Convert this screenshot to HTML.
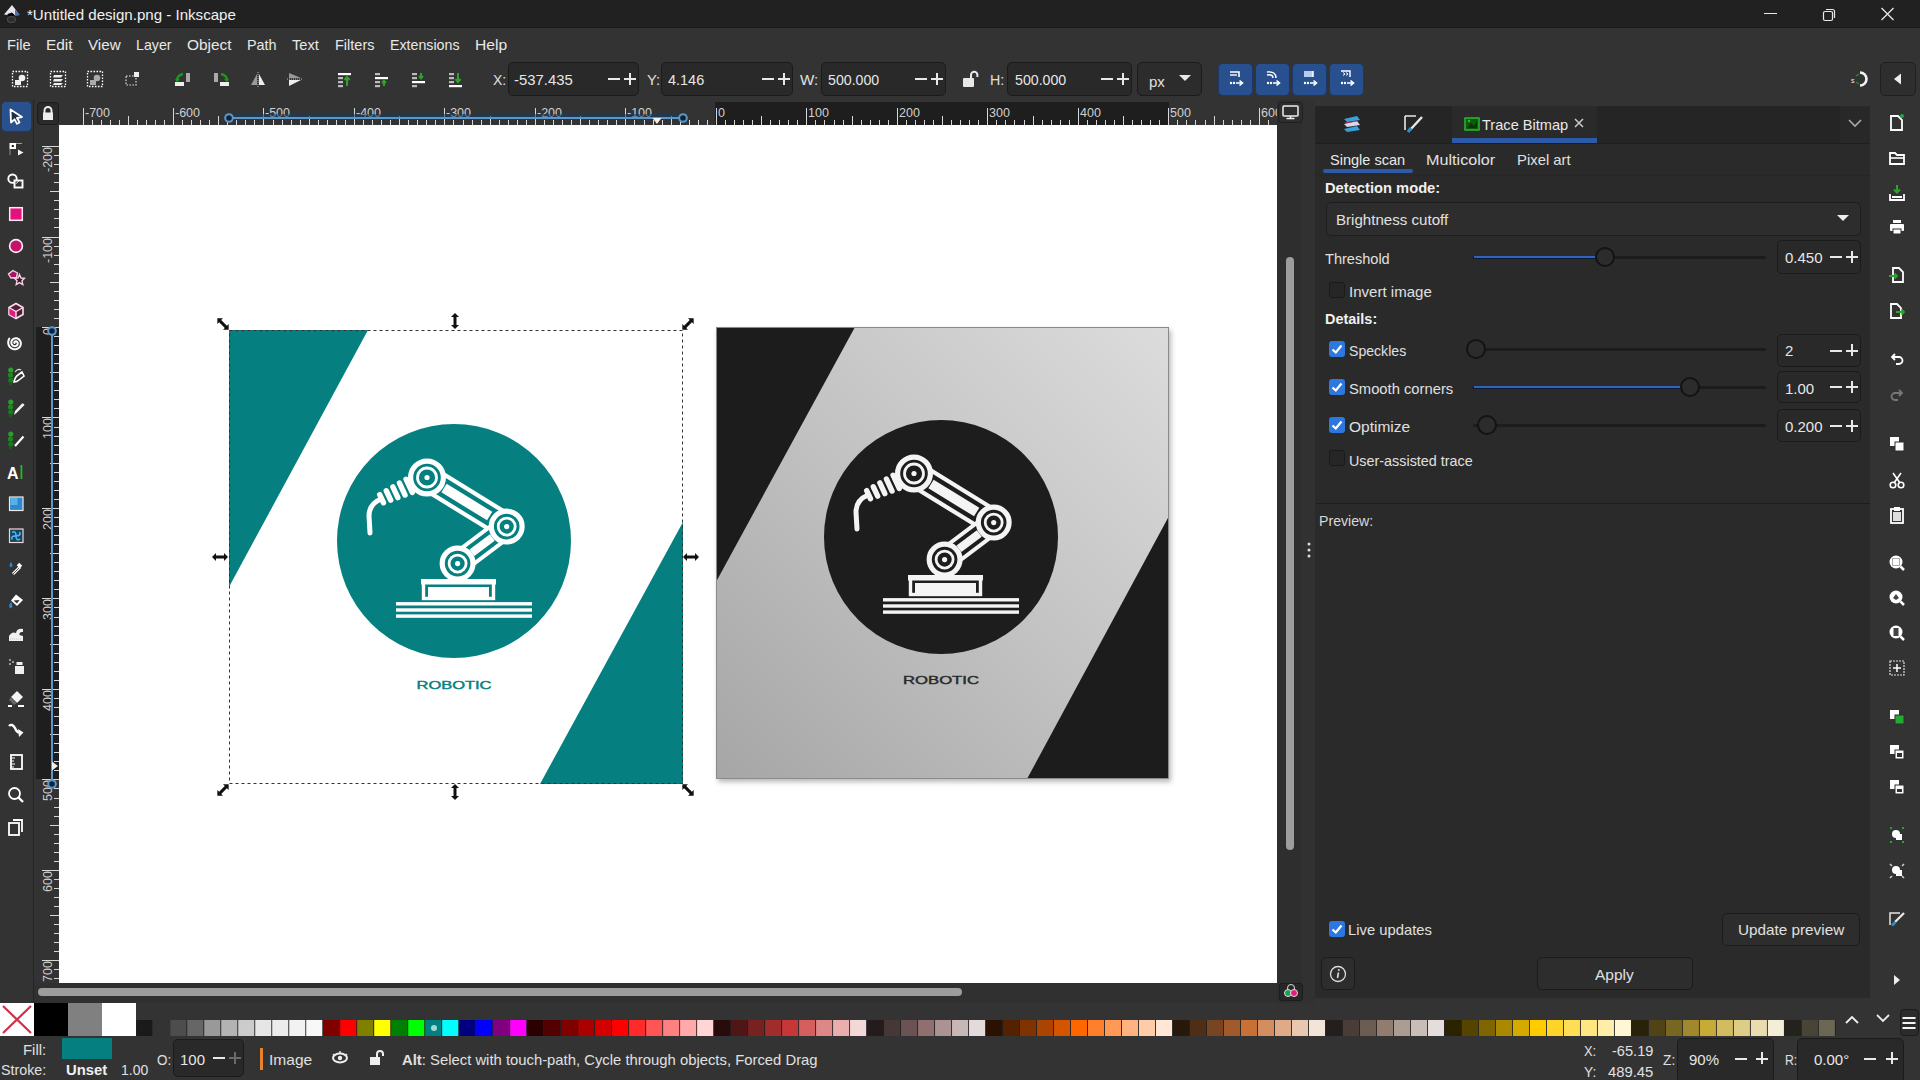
<!DOCTYPE html>
<html><head><meta charset="utf-8">
<style>
*{margin:0;padding:0;box-sizing:border-box}
html,body{width:1920px;height:1080px;overflow:hidden;background:#333333;font-family:"Liberation Sans",sans-serif;color:#e6e6e6;position:relative}
.a{position:absolute}
.t{position:absolute;white-space:nowrap;line-height:1}
.box{position:absolute;background:#292929;border:1px solid #1b1b1b;border-radius:5px}
.btnb{position:absolute;background:#28508e;border:1px solid #1b3866;border-radius:5px}
.sw{position:absolute;top:1020px;height:16px}
</style></head><body>

<div class="a" style="left:0px;top:0px;width:1920px;height:28px;background:#212121;"></div>
<div class="a" style="left:0px;top:27px;width:1920px;height:1px;background:#1a1a1a;"></div>
<svg class="a" style="left:0px;top:0px;" width="24" height="28" viewBox="0 0 24 28"><path d="M4 14.5 L12 5 L15.5 9.5 L19.5 15 L15 15.5 L12 13 L8 15Z" fill="#e6e6ee"/><path d="M15 9.5 L20 15 L15 15.5Z" fill="#4f6fa6"/><path d="M7.5 14 L12 12.5 L15 15.5 L12 16.5 L8 16Z" fill="#060610"/><ellipse cx="11.5" cy="19.5" rx="4" ry="3" fill="#2e2e2e" stroke="#4a4a4a" stroke-width="1.2"/></svg>
<div class="t tt" style="left:27px;top:7.3px;font-size:15px;color:#f0f0f0;font-weight:normal;transform-origin:0 0;transform:scaleX(1.0061);">*Untitled design.png - Inkscape</div>
<div class="a" style="left:1764px;top:13px;width:13px;height:1.2px;background:#e8e8e8;"></div>
<svg class="a" style="left:1822px;top:7px;" width="16" height="16" viewBox="0 0 16 16"><rect x="1.5" y="4.5" width="9" height="9" rx="1.5" fill="none" stroke="#e8e8e8" stroke-width="1.2"/><path d="M4 2.5 H10.5 a2 2 0 0 1 2 2 V11" fill="none" stroke="#e8e8e8" stroke-width="1.2"/></svg>
<svg class="a" style="left:1880px;top:7px;" width="16" height="16" viewBox="0 0 16 16"><path d="M1.5 1 L13.5 13 M13.5 1 L1.5 13" stroke="#e8e8e8" stroke-width="1.3"/></svg>
<div class="t tt" style="left:7.300000000000001px;top:37.3px;font-size:15px;color:#e8e8e8;font-weight:normal;transform-origin:0 0;transform:scaleX(0.9763);">File</div>
<div class="t tt" style="left:46.3px;top:37.3px;font-size:15px;color:#e8e8e8;font-weight:normal;transform-origin:0 0;transform:scaleX(1.0286);">Edit</div>
<div class="t tt" style="left:88.3px;top:37.3px;font-size:15px;color:#e8e8e8;font-weight:normal;transform-origin:0 0;transform:scaleX(1.0109);">View</div>
<div class="t tt" style="left:136.3px;top:37.3px;font-size:15px;color:#e8e8e8;font-weight:normal;transform-origin:0 0;transform:scaleX(0.9485);">Layer</div>
<div class="t tt" style="left:187.3px;top:37.3px;font-size:15px;color:#e8e8e8;font-weight:normal;transform-origin:0 0;transform:scaleX(1.0286);">Object</div>
<div class="t tt" style="left:247.3px;top:37.3px;font-size:15px;color:#e8e8e8;font-weight:normal;transform-origin:0 0;transform:scaleX(0.9592);">Path</div>
<div class="t tt" style="left:292.3px;top:37.3px;font-size:15px;color:#e8e8e8;font-weight:normal;transform-origin:0 0;transform:scaleX(0.9776);">Text</div>
<div class="t tt" style="left:334.7px;top:37.3px;font-size:15px;color:#e8e8e8;font-weight:normal;transform-origin:0 0;transform:scaleX(0.9671);">Filters</div>
<div class="t tt" style="left:389.7px;top:37.3px;font-size:15px;color:#e8e8e8;font-weight:normal;transform-origin:0 0;transform:scaleX(0.9472);">Extensions</div>
<div class="t tt" style="left:474.7px;top:37.3px;font-size:15px;color:#e8e8e8;font-weight:normal;transform-origin:0 0;transform:scaleX(1.0434);">Help</div>
<svg class="a" style="left:11px;top:70px;" width="18" height="18" viewBox="0 0 18 18"><rect x="1.5" y="1.5" width="15" height="15" fill="none" stroke="#fff" stroke-width="1.3" stroke-dasharray="1.6 1.4"/><path d="M4 10 h6 v5 h-6z" fill="#f0f0f0"/><circle cx="11" cy="8" r="3.3" fill="#f0f0f0"/></svg>
<svg class="a" style="left:49px;top:70px;" width="18" height="18" viewBox="0 0 18 18"><rect x="1.5" y="1.5" width="15" height="15" fill="none" stroke="#fff" stroke-width="1.3" stroke-dasharray="1.6 1.4"/><path d="M5 5 h9 l-2 2.5 h-8z M5 9 h9 l-2 2.5 h-8z M5 13 h9 l-2 2 h-8z" fill="#eee"/></svg>
<svg class="a" style="left:86px;top:70px;" width="18" height="18" viewBox="0 0 18 18"><rect x="1.5" y="1.5" width="15" height="15" fill="none" stroke="#fff" stroke-width="1.3" stroke-dasharray="1.6 1.4"/><path d="M4 10 h6 v5 h-6z" fill="#aaa"/><circle cx="11" cy="8" r="3.3" fill="#aaa"/></svg>
<svg class="a" style="left:123px;top:70px;" width="18" height="18" viewBox="0 0 18 18"><rect x="3" y="6" width="10" height="9" fill="none" stroke="#ddd" stroke-width="1.2" stroke-dasharray="1.6 1.4"/><rect x="11" y="2" width="5" height="5" fill="#eee"/></svg>
<svg class="a" style="left:174px;top:70px;" width="18" height="18" viewBox="0 0 18 18"><rect x="1" y="12" width="9" height="4" fill="#eee"/><rect x="12" y="3" width="4" height="9" fill="#aaa"/><path d="M3 11 Q3 5 9 4" stroke="#1a9a1a" stroke-width="2.4" fill="none"/><path d="M1 9 L3 12 L6 9Z" fill="#1a9a1a"/></svg>
<svg class="a" style="left:212px;top:70px;" width="18" height="18" viewBox="0 0 18 18"><rect x="8" y="12" width="9" height="4" fill="#eee"/><rect x="2" y="3" width="4" height="9" fill="#aaa"/><path d="M15 11 Q15 5 9 4" stroke="#1a9a1a" stroke-width="2.4" fill="none"/><path d="M17 9 L15 12 L12 9Z" fill="#1a9a1a"/></svg>
<svg class="a" style="left:249px;top:70px;" width="18" height="18" viewBox="0 0 18 18"><path d="M8 4 L8 15 L2 15Z" fill="#999"/><path d="M10 4 L10 15 L16 15Z" fill="#eee"/><path d="M9 2 V17" stroke="#ddd" stroke-width="0.8" stroke-dasharray="1 1"/></svg>
<svg class="a" style="left:286px;top:70px;" width="18" height="18" viewBox="0 0 18 18"><path d="M3 8 L15 8 L3 3Z" fill="#999"/><path d="M3 10 L15 10 L3 16Z" fill="#eee"/><path d="M1 9 H17" stroke="#ddd" stroke-width="0.8" stroke-dasharray="1 1"/></svg>
<svg class="a" style="left:336px;top:70px;" width="18" height="18" viewBox="0 0 18 18"><rect x="2" y="3" width="13" height="2.2" fill="#fff"/><rect x="2" y="7" width="5" height="2.2" fill="#bbb"/><rect x="2" y="11" width="5" height="2.2" fill="#bbb"/><rect x="2" y="15" width="5" height="2.2" fill="#bbb"/><path d="M11 16 V8 M8.5 10 L11 7 L13.5 10" stroke="#2aa52a" stroke-width="2" fill="none"/></svg>
<svg class="a" style="left:373px;top:70px;" width="18" height="18" viewBox="0 0 18 18"><rect x="2" y="3" width="5" height="2.2" fill="#bbb"/><rect x="2" y="7" width="13" height="2.2" fill="#fff"/><rect x="2" y="11" width="5" height="2.2" fill="#bbb"/><rect x="2" y="15" width="5" height="2.2" fill="#bbb"/><path d="M11 16 V11 M9 13 L11 10.5 L13 13" stroke="#2aa52a" stroke-width="2" fill="none"/></svg>
<svg class="a" style="left:410px;top:70px;" width="18" height="18" viewBox="0 0 18 18"><rect x="2" y="3" width="5" height="2.2" fill="#bbb"/><rect x="2" y="7" width="5" height="2.2" fill="#bbb"/><rect x="2" y="11" width="13" height="2.2" fill="#fff"/><rect x="2" y="15" width="5" height="2.2" fill="#bbb"/><path d="M11 3 V8 M9 6 L11 8.5 L13 6" stroke="#2aa52a" stroke-width="2" fill="none"/></svg>
<svg class="a" style="left:447px;top:70px;" width="18" height="18" viewBox="0 0 18 18"><rect x="2" y="3" width="5" height="2.2" fill="#bbb"/><rect x="2" y="7" width="5" height="2.2" fill="#bbb"/><rect x="2" y="11" width="5" height="2.2" fill="#bbb"/><rect x="2" y="15" width="13" height="2.2" fill="#fff"/><path d="M11 3 V12 M8.5 9 L11 12 L13.5 9" stroke="#2aa52a" stroke-width="2" fill="none"/></svg>
<div class="t tt" style="left:492.5px;top:72.3px;font-size:15px;color:#e0e0e0;font-weight:normal;transform-origin:0 0;transform:scaleX(0.9304);">X:</div>
<div class="box" style="left:508px;top:62px;width:131px;height:34px"></div>
<div class="t tt" style="left:514px;top:72.3px;font-size:15px;color:#e6e6e6;font-weight:normal;transform-origin:0 0;transform:scaleX(0.9912);">-537.435</div>
<div class="a" style="left:608px;top:78px;width:12px;height:1.6px;background:#e8e8e8;"></div>
<div class="a" style="left:624px;top:78px;width:12px;height:1.6px;background:#e8e8e8;"></div>
<div class="a" style="left:629.2px;top:73px;width:1.6px;height:12px;background:#e8e8e8;"></div>
<div class="t tt" style="left:646.5px;top:72.3px;font-size:15px;color:#e0e0e0;font-weight:normal;transform-origin:0 0;transform:scaleX(0.9881);">Y:</div>
<div class="box" style="left:661px;top:62px;width:132px;height:34px"></div>
<div class="t tt" style="left:668px;top:72.3px;font-size:15px;color:#e6e6e6;font-weight:normal;transform-origin:0 0;transform:scaleX(0.9641);">4.146</div>
<div class="a" style="left:762px;top:78px;width:12px;height:1.6px;background:#e8e8e8;"></div>
<div class="a" style="left:778px;top:78px;width:12px;height:1.6px;background:#e8e8e8;"></div>
<div class="a" style="left:783.2px;top:73px;width:1.6px;height:12px;background:#e8e8e8;"></div>
<div class="t tt" style="left:799.5px;top:72.3px;font-size:15px;color:#e0e0e0;font-weight:normal;transform-origin:0 0;transform:scaleX(1.0076);">W:</div>
<div class="box" style="left:821px;top:62px;width:125px;height:34px"></div>
<div class="t tt" style="left:827.5px;top:72.3px;font-size:15px;color:#e6e6e6;font-weight:normal;transform-origin:0 0;transform:scaleX(0.9441);">500.000</div>
<div class="a" style="left:915px;top:78px;width:12px;height:1.6px;background:#e8e8e8;"></div>
<div class="a" style="left:931px;top:78px;width:12px;height:1.6px;background:#e8e8e8;"></div>
<div class="a" style="left:936.2px;top:73px;width:1.6px;height:12px;background:#e8e8e8;"></div>
<svg class="a" style="left:961px;top:70px;" width="18" height="18" viewBox="0 0 18 18"><rect x="2" y="8" width="11" height="9" rx="1" fill="#e8e8e8"/><path d="M10 8 V5 a3.2 3.2 0 0 1 6.4 0 V7" stroke="#e8e8e8" stroke-width="2" fill="none"/></svg>
<div class="t tt" style="left:990px;top:72.3px;font-size:15px;color:#e0e0e0;font-weight:normal;transform-origin:0 0;transform:scaleX(0.9467);">H:</div>
<div class="box" style="left:1007px;top:62px;width:125px;height:34px"></div>
<div class="t tt" style="left:1015px;top:72.3px;font-size:15px;color:#e6e6e6;font-weight:normal;transform-origin:0 0;transform:scaleX(0.9441);">500.000</div>
<div class="a" style="left:1101px;top:78px;width:12px;height:1.6px;background:#e8e8e8;"></div>
<div class="a" style="left:1117px;top:78px;width:12px;height:1.6px;background:#e8e8e8;"></div>
<div class="a" style="left:1122.2px;top:73px;width:1.6px;height:12px;background:#e8e8e8;"></div>
<div class="box" style="left:1137px;top:62px;width:65px;height:34px;background:#2c2c2c"></div>
<div class="t tt" style="left:1149px;top:74.3px;font-size:15px;color:#e0e0e0;font-weight:normal;">px</div>
<svg class="a" style="left:1177px;top:72px;" width="16" height="12" viewBox="0 0 16 12"><path d="M2 3 H14 L8 9Z" fill="#e8e8e8"/></svg>
<div class="btnb" style="left:1218px;top:63px;width:35px;height:33px"></div>
<svg class="a" style="left:1226px;top:68px;" width="20" height="22" viewBox="0 0 20 22"><path d="M4 4 H13 V9" stroke="#fff" stroke-width="1.6" fill="none"/><path d="M4 7 H11" stroke="#fff" stroke-width="1.4"/><circle cx="5" cy="15" r="1.2" fill="#fff"/><circle cx="8" cy="15" r="1.2" fill="#fff"/><path d="M10 15 H16 M13.5 12.5 L16.5 15 L13.5 17.5" stroke="#fff" stroke-width="1.6" fill="none"/></svg>
<div class="btnb" style="left:1255px;top:63px;width:35px;height:33px"></div>
<svg class="a" style="left:1263px;top:68px;" width="20" height="22" viewBox="0 0 20 22"><path d="M4 4 Q13 3 13 10 M4 7 Q10 6 10 10" stroke="#fff" stroke-width="1.5" fill="none"/><circle cx="5" cy="15" r="1.2" fill="#fff"/><circle cx="8" cy="15" r="1.2" fill="#fff"/><path d="M10 15 H16 M13.5 12.5 L16.5 15 L13.5 17.5" stroke="#fff" stroke-width="1.6" fill="none"/></svg>
<div class="btnb" style="left:1292px;top:63px;width:35px;height:33px"></div>
<svg class="a" style="left:1300px;top:68px;" width="20" height="22" viewBox="0 0 20 22"><rect x="4" y="3" width="9" height="6" fill="#cfe0ff" opacity=".85"/><path d="M13 3 V9" stroke="#fff" stroke-width="1.5"/><circle cx="5" cy="15" r="1.2" fill="#fff"/><circle cx="8" cy="15" r="1.2" fill="#fff"/><path d="M10 15 H16 M13.5 12.5 L16.5 15 L13.5 17.5" stroke="#fff" stroke-width="1.6" fill="none"/></svg>
<div class="btnb" style="left:1329px;top:63px;width:35px;height:33px"></div>
<svg class="a" style="left:1337px;top:68px;" width="20" height="22" viewBox="0 0 20 22"><path d="M4 3 H13 V9" stroke="#fff" stroke-width="1.4" fill="none"/><path d="M6 4.5 L8 6 L6 7.5 M9 4.5 L11 6 L9 7.5" stroke="#fff" stroke-width="1" fill="none"/><circle cx="5" cy="15" r="1.2" fill="#fff"/><circle cx="8" cy="15" r="1.2" fill="#fff"/><path d="M10 15 H16 M13.5 12.5 L16.5 15 L13.5 17.5" stroke="#fff" stroke-width="1.6" fill="none"/></svg>
<svg class="a" style="left:1848px;top:68px;" width="24" height="22" viewBox="0 0 24 22"><path d="M12 4.5 A6.5 6.5 0 1 1 12 17.5" stroke="#f4f4f4" stroke-width="2.6" fill="none"/><path d="M8 8 L11 6 M8 14 L11 16" stroke="#2a8a3a" stroke-width="1.2"/><text x="3" y="15" font-size="7" fill="#eee" font-family="Liberation Sans">s</text></svg>
<div class="box" style="left:1880px;top:62px;width:36px;height:34px;background:#2e2e2e;border-color:#1f1f1f"></div>
<svg class="a" style="left:1890px;top:71px;" width="16" height="16" viewBox="0 0 16 16"><path d="M11 2.5 V13.5 L4 8Z" fill="#eee"/></svg>
<div class="a" style="left:33px;top:100px;width:1px;height:903px;background:#252525;"></div>
<div class="a" style="left:1px;top:101px;width:31px;height:31px;background:#28518d;border:1px solid #1d3a66;border-radius:5px"></div>
<svg class="a" style="left:6px;top:106px;" width="20" height="20" viewBox="0 0 20 20"><path d="M4.5 3.5 L16 11 L11 12 L13.5 16.5 L11 17.8 L8.6 13.3 L5 16.5Z" fill="#20304a" stroke="#fff" stroke-width="1.8" stroke-linejoin="round"/></svg>
<svg class="a" style="left:6px;top:138px;" width="20" height="20" viewBox="0 0 20 20"><rect x="3.5" y="5" width="6.5" height="6" fill="#fff"/><rect x="5.8" y="7" width="2" height="2" fill="#111"/><path d="M10 5.5 H16" stroke="#bbb" stroke-width="0.8"/><path d="M4 11 V17" stroke="#999" stroke-width="0.9"/><path d="M12 11.5 L17.5 14.5 L12 17.5Z" fill="#f4f4f4"/></svg>
<svg class="a" style="left:6px;top:171px;" width="20" height="20" viewBox="0 0 20 20"><circle cx="6.5" cy="7.7" r="4.2" fill="none" stroke="#fff" stroke-width="1.9"/><rect x="8.5" y="9.5" width="8" height="7" fill="#333" stroke="#fff" stroke-width="1.9"/><path d="M9.5 13 L13 10" stroke="#ddd" stroke-width="1"/></svg>
<svg class="a" style="left:6px;top:204px;" width="20" height="20" viewBox="0 0 20 20"><rect x="3.7" y="3.7" width="12.6" height="12.6" fill="#e3127f" stroke="#fde8f4" stroke-width="1.5"/></svg>
<svg class="a" style="left:6px;top:236px;" width="20" height="20" viewBox="0 0 20 20"><circle cx="10" cy="10" r="6.4" fill="#c4136a" stroke="#fdf0f6" stroke-width="1.6"/></svg>
<svg class="a" style="left:6px;top:268px;" width="20" height="20" viewBox="0 0 20 20"><path d="M7 2.5 L11.5 5 L10.5 9.5 L5 10 L2.5 6Z" fill="#a8155e" stroke="#f6d2e6" stroke-width="1.4"/><path d="M13.5 6.5 L15 10 L18.5 10.3 L16 12.8 L16.8 16.5 L13.5 14.6 L10.2 16.5 L11 12.8 L8.5 10.3 L12 10Z" fill="#3a1a2a" stroke="#f6d2e6" stroke-width="1.4"/></svg>
<svg class="a" style="left:6px;top:301px;" width="20" height="20" viewBox="0 0 20 20"><path d="M10 2.5 L17 6.5 V13.5 L10 17.5 L3 13.5 V6.5Z" fill="#5a1a3a" stroke="#fae0ee" stroke-width="1.6"/><path d="M3.5 7 L10 10.5 V17 L3.5 13.5Z" fill="#d8207e"/><path d="M3 6.5 L10 10.5 L17 6.5 M10 10.5 V17.5" stroke="#fae0ee" stroke-width="1.4" fill="none"/></svg>
<svg class="a" style="left:6px;top:333px;" width="20" height="20" viewBox="0 0 20 20"><path d="M8.50 10.00 L8.41 9.80 L8.38 9.57 L8.41 9.31 L8.51 9.04 L8.69 8.80 L8.94 8.59 L9.25 8.43 L9.61 8.35 L10.01 8.36 L10.42 8.46 L10.81 8.67 L11.16 8.98 L11.44 9.38 L11.64 9.85 L11.72 10.38 L11.68 10.94 L11.51 11.50 L11.20 12.03 L10.77 12.49 L10.23 12.85 L9.59 13.10 L8.90 13.19 L8.17 13.13 L7.46 12.90 L6.79 12.51 L6.21 11.96 L5.75 11.28 L5.45 10.49 L5.33 9.62 L5.40 8.73 L5.68 7.86 L6.15 7.04 L6.81 6.34 L7.63 5.78 L8.57 5.41 L9.60 5.25 L10.66 5.32 L11.70 5.64 L12.67 6.18 L13.51 6.94 L14.17 7.89 L14.62 8.98 L14.83 10.17 L14.76 11.40 L14.42 12.61 L13.82 13.74 L12.96 14.72 L11.89 15.50 L10.65 16.04 L9.30 16.30 L7.90 16.26 L6.52 15.90 L5.24 15.24 L4.11 14.30 L3.20 13.11 L2.56 11.73 L2.23 10.22 L2.25 8.65 L2.61 7.10 L3.31 5.65" fill="none" stroke="#fff" stroke-width="2" stroke-linecap="round"/></svg>
<svg class="a" style="left:6px;top:366px;" width="20" height="20" viewBox="0 0 20 20"><circle cx="4.8" cy="4" r="2.6" fill="#28a028"/><circle cx="4.5" cy="9" r="2.6" fill="#1e8a1e"/><circle cx="4.8" cy="14" r="2.6" fill="#1b7a1b"/><circle cx="4.5" cy="17.8" r="1.8" fill="#156015"/><path d="M8 16 Q9 11 12 9 L16 6 L18 10 L13 14 Q11 16 8 16Z" fill="none" stroke="#fff" stroke-width="1.6"/><path d="M9 6 Q12 2 15 4" stroke="#ddd" stroke-width="1.2" fill="none"/></svg>
<svg class="a" style="left:6px;top:398px;" width="20" height="20" viewBox="0 0 20 20"><circle cx="4.8" cy="4" r="2.6" fill="#28a028"/><circle cx="4.5" cy="9" r="2.6" fill="#1e8a1e"/><circle cx="4.8" cy="14" r="2.6" fill="#1b7a1b"/><circle cx="4.5" cy="17.8" r="1.8" fill="#156015"/><path d="M8 17 L9 13 L16 5.5 Q18 5 18.5 7 L11 14.5Z" fill="#f2f2f2"/></svg>
<svg class="a" style="left:6px;top:430px;" width="20" height="20" viewBox="0 0 20 20"><circle cx="4.8" cy="4" r="2.6" fill="#28a028"/><circle cx="4.5" cy="9" r="2.6" fill="#1e8a1e"/><circle cx="4.8" cy="14" r="2.6" fill="#1b7a1b"/><circle cx="4.5" cy="17.8" r="1.8" fill="#156015"/><path d="M9 16 L17.5 6.5" stroke="#fff" stroke-width="2.2"/></svg>
<svg class="a" style="left:6px;top:462px;" width="20" height="20" viewBox="0 0 20 20"><text x="1" y="17" font-size="16" font-weight="bold" fill="#fff" font-family="Liberation Sans">A</text><rect x="14.5" y="3" width="1.8" height="14" fill="#22bb22"/></svg>
<svg class="a" style="left:6px;top:494px;" width="20" height="20" viewBox="0 0 20 20"><rect x="3.5" y="3" width="13.5" height="13.5" fill="#2a8ad0" stroke="#f6e6e6" stroke-width="1.2"/><rect x="4.5" y="4" width="7" height="7" fill="#80d0f4" opacity=".55"/></svg>
<svg class="a" style="left:6px;top:526px;" width="20" height="20" viewBox="0 0 20 20"><rect x="3.5" y="3" width="13.5" height="13.5" fill="#16405e" stroke="#f0d6d6" stroke-width="1.2"/><path d="M6 6.5 Q10 4 10 9.8 Q10 15.5 14 13 M6.5 13.5 Q4 9.8 10 9.8 Q15.5 9.8 13.5 6" stroke="#48b4ea" stroke-width="1.7" fill="none"/></svg>
<svg class="a" style="left:6px;top:559px;" width="20" height="20" viewBox="0 0 20 20"><path d="M7 15 L14 8" stroke="#fff" stroke-width="3"/><path d="M6.5 15.5 L14.5 7.5" stroke="#333" stroke-width="0.8"/><path d="M12 5 L15 8" stroke="#fff" stroke-width="3.5"/><path d="M5 3 Q2 7 5 8.5 Q8 7 5 3Z" fill="#2a8ad0"/></svg>
<svg class="a" style="left:6px;top:591px;" width="20" height="20" viewBox="0 0 20 20"><path d="M10 3.5 L17 9 L11 15 L5 9.5Z" fill="#fff"/><path d="M7.5 9.5 L13.5 9 L11 12.5Z" fill="#333"/><path d="M5 11 Q1.5 15 4.5 17.5 Q8 16 5 11Z" fill="#2a8ad0"/></svg>
<svg class="a" style="left:6px;top:624px;" width="20" height="20" viewBox="0 0 20 20"><path d="M3 17 V12 Q6 7 10 9 Q11 4 17 5 V8 Q13 7.5 13.5 11 L17 12 V17Z" fill="#f0f0f0"/><path d="M4 15 H16" stroke="#aaa" stroke-width="0.6" stroke-dasharray="1 1"/></svg>
<svg class="a" style="left:6px;top:656px;" width="20" height="20" viewBox="0 0 20 20"><circle cx="4" cy="4" r="1" fill="#bbb"/><circle cx="7" cy="6" r="1" fill="#bbb"/><circle cx="4" cy="8" r="1" fill="#bbb"/><rect x="9" y="10" width="9" height="8" fill="#f0f0f0"/><rect x="10.5" y="6" width="6" height="3" fill="#f0f0f0"/></svg>
<svg class="a" style="left:6px;top:688px;" width="20" height="20" viewBox="0 0 20 20"><path d="M11 3 L17 9 L11 15 L5 9Z" fill="#f4f4f4"/><path d="M5 9 L11 15 L8 17 L3 12Z" fill="#666"/><rect x="2" y="17" width="4" height="2" fill="#fff"/><rect x="12" y="17" width="6" height="2" fill="#fff"/></svg>
<svg class="a" style="left:6px;top:720px;" width="20" height="20" viewBox="0 0 20 20"><path d="M3 6 Q6 3 9 8 Q11 13 14 12.5" stroke="#fff" stroke-width="2.4" fill="none"/><path d="M12 9 L17.5 12.5 L13 17Z" fill="#fff"/></svg>
<svg class="a" style="left:6px;top:752px;" width="20" height="20" viewBox="0 0 20 20"><rect x="5" y="3" width="11" height="14" fill="none" stroke="#fff" stroke-width="1.8"/><path d="M5 6 H9 M5 9 H8 M5 12 H9 M5 15 H8" stroke="#fff" stroke-width="1.2"/></svg>
<svg class="a" style="left:6px;top:785px;" width="20" height="20" viewBox="0 0 20 20"><circle cx="8.5" cy="8.5" r="5.5" fill="none" stroke="#fff" stroke-width="1.8"/><path d="M12.5 12.5 L17 17" stroke="#fff" stroke-width="2.4"/></svg>
<svg class="a" style="left:6px;top:817px;" width="20" height="20" viewBox="0 0 20 20"><rect x="3" y="6" width="10" height="12" fill="none" stroke="#fff" stroke-width="1.8"/><path d="M7 3 H16 V15" stroke="#fff" stroke-width="1.8" fill="none"/></svg>
<div class="a" style="left:37px;top:102px;width:22px;height:23px;background:#2a2a2a;border:1px solid #1c1c1c;border-radius:4px"></div>
<svg class="a" style="left:40px;top:105px;" width="16" height="16" viewBox="0 0 16 16"><path d="M4.5 8 V5.5 a3.5 3.5 0 0 1 7 0 V8" stroke="#eee" stroke-width="1.9" fill="none"/><rect x="3" y="7.5" width="10" height="7.5" fill="#eee"/></svg>
<div class="a" style="left:59px;top:102px;width:1218px;height:23px;background:#333333;"></div>
<div class="a" style="left:715px;top:102px;width:454px;height:23px;background:#1e1e1e;"></div>
<div class="t" style="left:85px;top:107px;font-size:12.5px;color:#d0d0d0">-700</div>
<div class="t" style="left:175px;top:107px;font-size:12.5px;color:#d0d0d0">-600</div>
<div class="t" style="left:265px;top:107px;font-size:12.5px;color:#d0d0d0">-500</div>
<div class="t" style="left:356px;top:107px;font-size:12.5px;color:#d0d0d0">-400</div>
<div class="t" style="left:446px;top:107px;font-size:12.5px;color:#d0d0d0">-300</div>
<div class="t" style="left:537px;top:107px;font-size:12.5px;color:#d0d0d0">-200</div>
<div class="t" style="left:627px;top:107px;font-size:12.5px;color:#d0d0d0">-100</div>
<div class="t" style="left:718px;top:107px;font-size:12.5px;color:#d0d0d0">0</div>
<div class="t" style="left:808px;top:107px;font-size:12.5px;color:#d0d0d0">100</div>
<div class="t" style="left:899px;top:107px;font-size:12.5px;color:#d0d0d0">200</div>
<div class="t" style="left:989px;top:107px;font-size:12.5px;color:#d0d0d0">300</div>
<div class="t" style="left:1080px;top:107px;font-size:12.5px;color:#d0d0d0">400</div>
<div class="t" style="left:1170px;top:107px;font-size:12.5px;color:#d0d0d0">500</div>
<div class="t" style="left:1261px;top:107px;font-size:12.5px;color:#d0d0d0">600</div>
<svg class="a" style="left:59px;top:102px;" width="1218" height="23" viewBox="0 0 1218 23"><rect x="24" y="6" width="1" height="17" fill="#d8d8d8"/><rect x="33" y="18" width="1" height="5" fill="#d8d8d8"/><rect x="42" y="18" width="1" height="5" fill="#d8d8d8"/><rect x="51" y="18" width="1" height="5" fill="#d8d8d8"/><rect x="60" y="18" width="1" height="5" fill="#d8d8d8"/><rect x="69" y="14" width="1" height="9" fill="#d8d8d8"/><rect x="78" y="18" width="1" height="5" fill="#d8d8d8"/><rect x="87" y="18" width="1" height="5" fill="#d8d8d8"/><rect x="96" y="18" width="1" height="5" fill="#d8d8d8"/><rect x="105" y="18" width="1" height="5" fill="#d8d8d8"/><rect x="114" y="6" width="1" height="17" fill="#d8d8d8"/><rect x="123" y="18" width="1" height="5" fill="#d8d8d8"/><rect x="132" y="18" width="1" height="5" fill="#d8d8d8"/><rect x="141" y="18" width="1" height="5" fill="#d8d8d8"/><rect x="150" y="18" width="1" height="5" fill="#d8d8d8"/><rect x="159" y="14" width="1" height="9" fill="#d8d8d8"/><rect x="168" y="18" width="1" height="5" fill="#d8d8d8"/><rect x="177" y="18" width="1" height="5" fill="#d8d8d8"/><rect x="186" y="18" width="1" height="5" fill="#d8d8d8"/><rect x="195" y="18" width="1" height="5" fill="#d8d8d8"/><rect x="204" y="6" width="1" height="17" fill="#d8d8d8"/><rect x="214" y="18" width="1" height="5" fill="#d8d8d8"/><rect x="223" y="18" width="1" height="5" fill="#d8d8d8"/><rect x="232" y="18" width="1" height="5" fill="#d8d8d8"/><rect x="241" y="18" width="1" height="5" fill="#d8d8d8"/><rect x="250" y="14" width="1" height="9" fill="#d8d8d8"/><rect x="259" y="18" width="1" height="5" fill="#d8d8d8"/><rect x="268" y="18" width="1" height="5" fill="#d8d8d8"/><rect x="277" y="18" width="1" height="5" fill="#d8d8d8"/><rect x="286" y="18" width="1" height="5" fill="#d8d8d8"/><rect x="295" y="6" width="1" height="17" fill="#d8d8d8"/><rect x="304" y="18" width="1" height="5" fill="#d8d8d8"/><rect x="313" y="18" width="1" height="5" fill="#d8d8d8"/><rect x="322" y="18" width="1" height="5" fill="#d8d8d8"/><rect x="331" y="18" width="1" height="5" fill="#d8d8d8"/><rect x="340" y="14" width="1" height="9" fill="#d8d8d8"/><rect x="349" y="18" width="1" height="5" fill="#d8d8d8"/><rect x="358" y="18" width="1" height="5" fill="#d8d8d8"/><rect x="367" y="18" width="1" height="5" fill="#d8d8d8"/><rect x="376" y="18" width="1" height="5" fill="#d8d8d8"/><rect x="385" y="6" width="1" height="17" fill="#d8d8d8"/><rect x="394" y="18" width="1" height="5" fill="#d8d8d8"/><rect x="404" y="18" width="1" height="5" fill="#d8d8d8"/><rect x="413" y="18" width="1" height="5" fill="#d8d8d8"/><rect x="422" y="18" width="1" height="5" fill="#d8d8d8"/><rect x="431" y="14" width="1" height="9" fill="#d8d8d8"/><rect x="440" y="18" width="1" height="5" fill="#d8d8d8"/><rect x="449" y="18" width="1" height="5" fill="#d8d8d8"/><rect x="458" y="18" width="1" height="5" fill="#d8d8d8"/><rect x="467" y="18" width="1" height="5" fill="#d8d8d8"/><rect x="476" y="6" width="1" height="17" fill="#d8d8d8"/><rect x="485" y="18" width="1" height="5" fill="#d8d8d8"/><rect x="494" y="18" width="1" height="5" fill="#d8d8d8"/><rect x="503" y="18" width="1" height="5" fill="#d8d8d8"/><rect x="512" y="18" width="1" height="5" fill="#d8d8d8"/><rect x="521" y="14" width="1" height="9" fill="#d8d8d8"/><rect x="530" y="18" width="1" height="5" fill="#d8d8d8"/><rect x="539" y="18" width="1" height="5" fill="#d8d8d8"/><rect x="548" y="18" width="1" height="5" fill="#d8d8d8"/><rect x="557" y="18" width="1" height="5" fill="#d8d8d8"/><rect x="566" y="6" width="1" height="17" fill="#d8d8d8"/><rect x="575" y="18" width="1" height="5" fill="#d8d8d8"/><rect x="585" y="18" width="1" height="5" fill="#d8d8d8"/><rect x="594" y="18" width="1" height="5" fill="#d8d8d8"/><rect x="603" y="18" width="1" height="5" fill="#d8d8d8"/><rect x="612" y="14" width="1" height="9" fill="#d8d8d8"/><rect x="621" y="18" width="1" height="5" fill="#d8d8d8"/><rect x="630" y="18" width="1" height="5" fill="#d8d8d8"/><rect x="639" y="18" width="1" height="5" fill="#d8d8d8"/><rect x="648" y="18" width="1" height="5" fill="#d8d8d8"/><rect x="657" y="6" width="1" height="17" fill="#d8d8d8"/><rect x="666" y="18" width="1" height="5" fill="#d8d8d8"/><rect x="675" y="18" width="1" height="5" fill="#d8d8d8"/><rect x="684" y="18" width="1" height="5" fill="#d8d8d8"/><rect x="693" y="18" width="1" height="5" fill="#d8d8d8"/><rect x="702" y="14" width="1" height="9" fill="#d8d8d8"/><rect x="711" y="18" width="1" height="5" fill="#d8d8d8"/><rect x="720" y="18" width="1" height="5" fill="#d8d8d8"/><rect x="729" y="18" width="1" height="5" fill="#d8d8d8"/><rect x="738" y="18" width="1" height="5" fill="#d8d8d8"/><rect x="747" y="6" width="1" height="17" fill="#d8d8d8"/><rect x="756" y="18" width="1" height="5" fill="#d8d8d8"/><rect x="765" y="18" width="1" height="5" fill="#d8d8d8"/><rect x="775" y="18" width="1" height="5" fill="#d8d8d8"/><rect x="784" y="18" width="1" height="5" fill="#d8d8d8"/><rect x="793" y="14" width="1" height="9" fill="#d8d8d8"/><rect x="802" y="18" width="1" height="5" fill="#d8d8d8"/><rect x="811" y="18" width="1" height="5" fill="#d8d8d8"/><rect x="820" y="18" width="1" height="5" fill="#d8d8d8"/><rect x="829" y="18" width="1" height="5" fill="#d8d8d8"/><rect x="838" y="6" width="1" height="17" fill="#d8d8d8"/><rect x="847" y="18" width="1" height="5" fill="#d8d8d8"/><rect x="856" y="18" width="1" height="5" fill="#d8d8d8"/><rect x="865" y="18" width="1" height="5" fill="#d8d8d8"/><rect x="874" y="18" width="1" height="5" fill="#d8d8d8"/><rect x="883" y="14" width="1" height="9" fill="#d8d8d8"/><rect x="892" y="18" width="1" height="5" fill="#d8d8d8"/><rect x="901" y="18" width="1" height="5" fill="#d8d8d8"/><rect x="910" y="18" width="1" height="5" fill="#d8d8d8"/><rect x="919" y="18" width="1" height="5" fill="#d8d8d8"/><rect x="928" y="6" width="1" height="17" fill="#d8d8d8"/><rect x="937" y="18" width="1" height="5" fill="#d8d8d8"/><rect x="946" y="18" width="1" height="5" fill="#d8d8d8"/><rect x="955" y="18" width="1" height="5" fill="#d8d8d8"/><rect x="965" y="18" width="1" height="5" fill="#d8d8d8"/><rect x="974" y="14" width="1" height="9" fill="#d8d8d8"/><rect x="983" y="18" width="1" height="5" fill="#d8d8d8"/><rect x="992" y="18" width="1" height="5" fill="#d8d8d8"/><rect x="1001" y="18" width="1" height="5" fill="#d8d8d8"/><rect x="1010" y="18" width="1" height="5" fill="#d8d8d8"/><rect x="1019" y="6" width="1" height="17" fill="#d8d8d8"/><rect x="1028" y="18" width="1" height="5" fill="#d8d8d8"/><rect x="1037" y="18" width="1" height="5" fill="#d8d8d8"/><rect x="1046" y="18" width="1" height="5" fill="#d8d8d8"/><rect x="1055" y="18" width="1" height="5" fill="#d8d8d8"/><rect x="1064" y="14" width="1" height="9" fill="#d8d8d8"/><rect x="1073" y="18" width="1" height="5" fill="#d8d8d8"/><rect x="1082" y="18" width="1" height="5" fill="#d8d8d8"/><rect x="1091" y="18" width="1" height="5" fill="#d8d8d8"/><rect x="1100" y="18" width="1" height="5" fill="#d8d8d8"/><rect x="1109" y="6" width="1" height="17" fill="#d8d8d8"/><rect x="1118" y="18" width="1" height="5" fill="#d8d8d8"/><rect x="1127" y="18" width="1" height="5" fill="#d8d8d8"/><rect x="1136" y="18" width="1" height="5" fill="#d8d8d8"/><rect x="1146" y="18" width="1" height="5" fill="#d8d8d8"/><rect x="1155" y="14" width="1" height="9" fill="#d8d8d8"/><rect x="1164" y="18" width="1" height="5" fill="#d8d8d8"/><rect x="1173" y="18" width="1" height="5" fill="#d8d8d8"/><rect x="1182" y="18" width="1" height="5" fill="#d8d8d8"/><rect x="1191" y="18" width="1" height="5" fill="#d8d8d8"/><rect x="1200" y="6" width="1" height="17" fill="#d8d8d8"/><rect x="1209" y="18" width="1" height="5" fill="#d8d8d8"/><rect x="1218" y="18" width="1" height="5" fill="#d8d8d8"/></svg>
<div class="a" style="left:233px;top:114px;width:446px;height:3px;background:rgba(20,60,100,.55);"></div>
<div class="a" style="left:229px;top:117px;width:454px;height:2px;background:#5a98cc;"></div>
<svg class="a" style="left:222px;top:111px;" width="14" height="14" viewBox="0 0 14 14"><circle cx="7" cy="7" r="3.8" fill="#123" stroke="#5a98cc" stroke-width="2"/></svg>
<svg class="a" style="left:650px;top:116px;" width="14" height="10" viewBox="0 0 14 10"><path d="M2.5 2 L11.5 2 L7 8Z" fill="#eee"/></svg>
<svg class="a" style="left:676px;top:111px;" width="14" height="14" viewBox="0 0 14 14"><circle cx="7" cy="7" r="3.8" fill="#123" stroke="#5a98cc" stroke-width="2"/></svg>
<div class="a" style="left:36px;top:125px;width:23px;height:858px;background:#333333;"></div>
<div class="a" style="left:36px;top:327px;width:23px;height:452px;background:#1e1e1e;"></div>
<div class="t" style="left:42px;top:147px;width:25.0px;height:12.5px;font-size:12.5px;color:#d0d0d0;transform-origin:0 0;transform:translate(0px,25.0px) rotate(-90deg)">-200</div>
<div class="t" style="left:42px;top:238px;width:25.0px;height:12.5px;font-size:12.5px;color:#d0d0d0;transform-origin:0 0;transform:translate(0px,25.0px) rotate(-90deg)">-100</div>
<div class="t" style="left:42px;top:328px;width:7.0px;height:12.5px;font-size:12.5px;color:#d0d0d0;transform-origin:0 0;transform:translate(0px,7.0px) rotate(-90deg)">0</div>
<div class="t" style="left:42px;top:418px;width:20.9px;height:12.5px;font-size:12.5px;color:#d0d0d0;transform-origin:0 0;transform:translate(0px,20.9px) rotate(-90deg)">100</div>
<div class="t" style="left:42px;top:509px;width:20.9px;height:12.5px;font-size:12.5px;color:#d0d0d0;transform-origin:0 0;transform:translate(0px,20.9px) rotate(-90deg)">200</div>
<div class="t" style="left:42px;top:599px;width:20.9px;height:12.5px;font-size:12.5px;color:#d0d0d0;transform-origin:0 0;transform:translate(0px,20.9px) rotate(-90deg)">300</div>
<div class="t" style="left:42px;top:690px;width:20.9px;height:12.5px;font-size:12.5px;color:#d0d0d0;transform-origin:0 0;transform:translate(0px,20.9px) rotate(-90deg)">400</div>
<div class="t" style="left:42px;top:780px;width:20.9px;height:12.5px;font-size:12.5px;color:#d0d0d0;transform-origin:0 0;transform:translate(0px,20.9px) rotate(-90deg)">500</div>
<div class="t" style="left:42px;top:871px;width:20.9px;height:12.5px;font-size:12.5px;color:#d0d0d0;transform-origin:0 0;transform:translate(0px,20.9px) rotate(-90deg)">600</div>
<div class="t" style="left:42px;top:961px;width:20.9px;height:12.5px;font-size:12.5px;color:#d0d0d0;transform-origin:0 0;transform:translate(0px,20.9px) rotate(-90deg)">700</div>
<svg class="a" style="left:36px;top:125px;" width="23" height="858" viewBox="0 0 23 858"><rect x="6" y="21" width="17" height="1" fill="#d8d8d8"/><rect x="18" y="30" width="5" height="1" fill="#d8d8d8"/><rect x="18" y="39" width="5" height="1" fill="#d8d8d8"/><rect x="18" y="48" width="5" height="1" fill="#d8d8d8"/><rect x="18" y="57" width="5" height="1" fill="#d8d8d8"/><rect x="14" y="66" width="9" height="1" fill="#d8d8d8"/><rect x="18" y="75" width="5" height="1" fill="#d8d8d8"/><rect x="18" y="84" width="5" height="1" fill="#d8d8d8"/><rect x="18" y="93" width="5" height="1" fill="#d8d8d8"/><rect x="18" y="102" width="5" height="1" fill="#d8d8d8"/><rect x="6" y="112" width="17" height="1" fill="#d8d8d8"/><rect x="18" y="121" width="5" height="1" fill="#d8d8d8"/><rect x="18" y="130" width="5" height="1" fill="#d8d8d8"/><rect x="18" y="139" width="5" height="1" fill="#d8d8d8"/><rect x="18" y="148" width="5" height="1" fill="#d8d8d8"/><rect x="14" y="157" width="9" height="1" fill="#d8d8d8"/><rect x="18" y="166" width="5" height="1" fill="#d8d8d8"/><rect x="18" y="175" width="5" height="1" fill="#d8d8d8"/><rect x="18" y="184" width="5" height="1" fill="#d8d8d8"/><rect x="18" y="193" width="5" height="1" fill="#d8d8d8"/><rect x="6" y="202" width="17" height="1" fill="#d8d8d8"/><rect x="18" y="211" width="5" height="1" fill="#d8d8d8"/><rect x="18" y="220" width="5" height="1" fill="#d8d8d8"/><rect x="18" y="229" width="5" height="1" fill="#d8d8d8"/><rect x="18" y="238" width="5" height="1" fill="#d8d8d8"/><rect x="14" y="247" width="9" height="1" fill="#d8d8d8"/><rect x="18" y="256" width="5" height="1" fill="#d8d8d8"/><rect x="18" y="265" width="5" height="1" fill="#d8d8d8"/><rect x="18" y="274" width="5" height="1" fill="#d8d8d8"/><rect x="18" y="283" width="5" height="1" fill="#d8d8d8"/><rect x="6" y="292" width="17" height="1" fill="#d8d8d8"/><rect x="18" y="302" width="5" height="1" fill="#d8d8d8"/><rect x="18" y="311" width="5" height="1" fill="#d8d8d8"/><rect x="18" y="320" width="5" height="1" fill="#d8d8d8"/><rect x="18" y="329" width="5" height="1" fill="#d8d8d8"/><rect x="14" y="338" width="9" height="1" fill="#d8d8d8"/><rect x="18" y="347" width="5" height="1" fill="#d8d8d8"/><rect x="18" y="356" width="5" height="1" fill="#d8d8d8"/><rect x="18" y="365" width="5" height="1" fill="#d8d8d8"/><rect x="18" y="374" width="5" height="1" fill="#d8d8d8"/><rect x="6" y="383" width="17" height="1" fill="#d8d8d8"/><rect x="18" y="392" width="5" height="1" fill="#d8d8d8"/><rect x="18" y="401" width="5" height="1" fill="#d8d8d8"/><rect x="18" y="410" width="5" height="1" fill="#d8d8d8"/><rect x="18" y="419" width="5" height="1" fill="#d8d8d8"/><rect x="14" y="428" width="9" height="1" fill="#d8d8d8"/><rect x="18" y="437" width="5" height="1" fill="#d8d8d8"/><rect x="18" y="446" width="5" height="1" fill="#d8d8d8"/><rect x="18" y="455" width="5" height="1" fill="#d8d8d8"/><rect x="18" y="464" width="5" height="1" fill="#d8d8d8"/><rect x="6" y="473" width="17" height="1" fill="#d8d8d8"/><rect x="18" y="482" width="5" height="1" fill="#d8d8d8"/><rect x="18" y="492" width="5" height="1" fill="#d8d8d8"/><rect x="18" y="501" width="5" height="1" fill="#d8d8d8"/><rect x="18" y="510" width="5" height="1" fill="#d8d8d8"/><rect x="14" y="519" width="9" height="1" fill="#d8d8d8"/><rect x="18" y="528" width="5" height="1" fill="#d8d8d8"/><rect x="18" y="537" width="5" height="1" fill="#d8d8d8"/><rect x="18" y="546" width="5" height="1" fill="#d8d8d8"/><rect x="18" y="555" width="5" height="1" fill="#d8d8d8"/><rect x="6" y="564" width="17" height="1" fill="#d8d8d8"/><rect x="18" y="573" width="5" height="1" fill="#d8d8d8"/><rect x="18" y="582" width="5" height="1" fill="#d8d8d8"/><rect x="18" y="591" width="5" height="1" fill="#d8d8d8"/><rect x="18" y="600" width="5" height="1" fill="#d8d8d8"/><rect x="14" y="609" width="9" height="1" fill="#d8d8d8"/><rect x="18" y="618" width="5" height="1" fill="#d8d8d8"/><rect x="18" y="627" width="5" height="1" fill="#d8d8d8"/><rect x="18" y="636" width="5" height="1" fill="#d8d8d8"/><rect x="18" y="645" width="5" height="1" fill="#d8d8d8"/><rect x="6" y="654" width="17" height="1" fill="#d8d8d8"/><rect x="18" y="663" width="5" height="1" fill="#d8d8d8"/><rect x="18" y="673" width="5" height="1" fill="#d8d8d8"/><rect x="18" y="682" width="5" height="1" fill="#d8d8d8"/><rect x="18" y="691" width="5" height="1" fill="#d8d8d8"/><rect x="14" y="700" width="9" height="1" fill="#d8d8d8"/><rect x="18" y="709" width="5" height="1" fill="#d8d8d8"/><rect x="18" y="718" width="5" height="1" fill="#d8d8d8"/><rect x="18" y="727" width="5" height="1" fill="#d8d8d8"/><rect x="18" y="736" width="5" height="1" fill="#d8d8d8"/><rect x="6" y="745" width="17" height="1" fill="#d8d8d8"/><rect x="18" y="754" width="5" height="1" fill="#d8d8d8"/><rect x="18" y="763" width="5" height="1" fill="#d8d8d8"/><rect x="18" y="772" width="5" height="1" fill="#d8d8d8"/><rect x="18" y="781" width="5" height="1" fill="#d8d8d8"/><rect x="14" y="790" width="9" height="1" fill="#d8d8d8"/><rect x="18" y="799" width="5" height="1" fill="#d8d8d8"/><rect x="18" y="808" width="5" height="1" fill="#d8d8d8"/><rect x="18" y="817" width="5" height="1" fill="#d8d8d8"/><rect x="18" y="826" width="5" height="1" fill="#d8d8d8"/><rect x="6" y="835" width="17" height="1" fill="#d8d8d8"/><rect x="18" y="844" width="5" height="1" fill="#d8d8d8"/><rect x="18" y="853" width="5" height="1" fill="#d8d8d8"/></svg>
<div class="a" style="left:51px;top:331px;width:2px;height:453px;background:#5a98cc;"></div>
<svg class="a" style="left:45px;top:324px;" width="14" height="14" viewBox="0 0 14 14"><circle cx="7" cy="7" r="3.8" fill="#123" stroke="#5a98cc" stroke-width="2"/></svg>
<svg class="a" style="left:45px;top:777px;" width="14" height="14" viewBox="0 0 14 14"><circle cx="7" cy="7" r="3.8" fill="#123" stroke="#5a98cc" stroke-width="2"/></svg>
<svg class="a" style="left:50px;top:759px;" width="10" height="14" viewBox="0 0 10 14"><path d="M2 2.5 L2 11.5 L8 7Z" fill="#eee"/></svg>
<div class="a" style="left:59px;top:125px;width:1218px;height:858px;background:#ffffff;"></div>
<svg class="a" style="left:229px;top:330px;" width="454" height="454" viewBox="0 0 454 454"><rect x="0" y="0" width="454" height="454" fill="#fff"/><path d="M0 0 L139 0 L0 257Z" fill="#067f80"/><path d="M454 192 L454 454 L311 454Z" fill="#067f80"/><g transform="translate(225,211)"><circle cx="0" cy="0" r="117" fill="#067f80"/><g transform="translate(-27,-63.5) rotate(31.64)"><rect x="8" y="-11.5" width="77.6" height="23" fill="#067f80" stroke="#ffffff" stroke-width="4.2"/><rect x="20" y="-5" width="53.6" height="10" fill="#ffffff"/></g><g transform="translate(52.7,-14.4) rotate(143.00)"><rect x="8" y="-10" width="45.5" height="20" fill="#067f80" stroke="#ffffff" stroke-width="4"/><rect x="18" y="-4" width="25.5" height="8" fill="#ffffff"/></g><g transform="translate(-27,-63.5) rotate(155)"><rect x="17.0" y="-10.0" width="5.4" height="20.0" rx="2.7" fill="#ffffff"/><rect x="24.6" y="-9.3" width="5.4" height="18.6" rx="2.7" fill="#ffffff"/><rect x="32.2" y="-8.6" width="5.4" height="17.2" rx="2.7" fill="#ffffff"/><rect x="39.8" y="-7.9" width="5.4" height="15.8" rx="2.7" fill="#ffffff"/><rect x="47.4" y="-7.2" width="5.4" height="14.4" rx="2.7" fill="#ffffff"/></g><path d="M-73 -42 Q-85 -37 -85 -25 L-84 -8" stroke="#ffffff" stroke-width="5" fill="none" stroke-linecap="round"/><circle cx="-27" cy="-63.5" r="16.4" fill="#067f80" stroke="#ffffff" stroke-width="5.2"/><circle cx="-27" cy="-63.5" r="9.5" fill="none" stroke="#ffffff" stroke-width="2.8"/><circle cx="-27" cy="-63.5" r="2.6" fill="#ffffff"/><circle cx="52.7" cy="-14.4" r="15.4" fill="#067f80" stroke="#ffffff" stroke-width="5.2"/><circle cx="52.7" cy="-14.4" r="8.5" fill="none" stroke="#ffffff" stroke-width="2.8"/><circle cx="52.7" cy="-14.4" r="2.6" fill="#ffffff"/><circle cx="3.6" cy="22.6" r="15.4" fill="#067f80" stroke="#ffffff" stroke-width="5.2"/><circle cx="3.6" cy="22.6" r="8.5" fill="none" stroke="#ffffff" stroke-width="2.8"/><circle cx="3.6" cy="22.6" r="2.6" fill="#ffffff"/><rect x="-33" y="38" width="75" height="5.5" fill="#ffffff"/><rect x="-30.5" y="41" width="70" height="16.5" fill="none" stroke="#ffffff" stroke-width="3.4"/><rect x="-26" y="46" width="61" height="10" fill="#ffffff"/><rect x="-58" y="61.1" width="136" height="3.4" fill="#ffffff"/><rect x="-58" y="67.30000000000001" width="136" height="3.4" fill="#ffffff"/><rect x="-58" y="73.4" width="136" height="3.4" fill="#ffffff"/></g><text x="225" y="359" text-anchor="middle" font-family="Liberation Sans" font-weight="normal" font-size="10.5" fill="#067f80" stroke="#067f80" stroke-width="0.4" textLength="75" lengthAdjust="spacingAndGlyphs">ROBOTIC</text></svg>
<svg class="a" style="left:716px;top:327px;box-shadow:2px 3px 5px rgba(0,0,0,.28)" width="453" height="452" viewBox="0 0 453 452"><defs><linearGradient id="g2" x1="0" y1="1" x2="1" y2="0"><stop offset="0" stop-color="#a6a6a6"/><stop offset=".5" stop-color="#c2c2c2"/><stop offset="1" stop-color="#dcdcdc"/></linearGradient></defs><rect x="0" y="0" width="453" height="452" fill="url(#g2)"/><path d="M0 0 L139 0 L0 255Z" fill="#1c1c1c"/><path d="M453 189 L453 452 L311 452Z" fill="#1c1c1c"/><g transform="translate(225,210)"><circle cx="0" cy="0" r="117" fill="#1d1d1d"/><g transform="translate(-27,-63.5) rotate(31.64)"><rect x="8" y="-11.5" width="77.6" height="23" fill="#1d1d1d" stroke="#f4f4f4" stroke-width="4.2"/><rect x="20" y="-5" width="53.6" height="10" fill="#f4f4f4"/></g><g transform="translate(52.7,-14.4) rotate(143.00)"><rect x="8" y="-10" width="45.5" height="20" fill="#1d1d1d" stroke="#f4f4f4" stroke-width="4"/><rect x="18" y="-4" width="25.5" height="8" fill="#f4f4f4"/></g><g transform="translate(-27,-63.5) rotate(155)"><rect x="17.0" y="-10.0" width="5.4" height="20.0" rx="2.7" fill="#f4f4f4"/><rect x="24.6" y="-9.3" width="5.4" height="18.6" rx="2.7" fill="#f4f4f4"/><rect x="32.2" y="-8.6" width="5.4" height="17.2" rx="2.7" fill="#f4f4f4"/><rect x="39.8" y="-7.9" width="5.4" height="15.8" rx="2.7" fill="#f4f4f4"/><rect x="47.4" y="-7.2" width="5.4" height="14.4" rx="2.7" fill="#f4f4f4"/></g><path d="M-73 -42 Q-85 -37 -85 -25 L-84 -8" stroke="#f4f4f4" stroke-width="5" fill="none" stroke-linecap="round"/><circle cx="-27" cy="-63.5" r="16.4" fill="#1d1d1d" stroke="#f4f4f4" stroke-width="5.2"/><circle cx="-27" cy="-63.5" r="9.5" fill="none" stroke="#f4f4f4" stroke-width="2.8"/><circle cx="-27" cy="-63.5" r="2.6" fill="#f4f4f4"/><circle cx="52.7" cy="-14.4" r="15.4" fill="#1d1d1d" stroke="#f4f4f4" stroke-width="5.2"/><circle cx="52.7" cy="-14.4" r="8.5" fill="none" stroke="#f4f4f4" stroke-width="2.8"/><circle cx="52.7" cy="-14.4" r="2.6" fill="#f4f4f4"/><circle cx="3.6" cy="22.6" r="15.4" fill="#1d1d1d" stroke="#f4f4f4" stroke-width="5.2"/><circle cx="3.6" cy="22.6" r="8.5" fill="none" stroke="#f4f4f4" stroke-width="2.8"/><circle cx="3.6" cy="22.6" r="2.6" fill="#f4f4f4"/><rect x="-33" y="38" width="75" height="5.5" fill="#f4f4f4"/><rect x="-30.5" y="41" width="70" height="16.5" fill="none" stroke="#f4f4f4" stroke-width="3.4"/><rect x="-26" y="46" width="61" height="10" fill="#f4f4f4"/><rect x="-58" y="61.1" width="136" height="3.4" fill="#f4f4f4"/><rect x="-58" y="67.30000000000001" width="136" height="3.4" fill="#f4f4f4"/><rect x="-58" y="73.4" width="136" height="3.4" fill="#f4f4f4"/></g><text x="225" y="357" text-anchor="middle" font-family="Liberation Sans" font-weight="normal" font-size="10.5" fill="#2a2a2a" stroke="#2a2a2a" stroke-width="0.4" textLength="76" lengthAdjust="spacingAndGlyphs">ROBOTIC</text><rect x="0.5" y="0.5" width="452" height="451" fill="none" stroke="#8a8a8a" stroke-width="1"/></svg>
<svg class="a" style="left:226px;top:327px;" width="460" height="460" viewBox="0 0 460 460"><rect x="3.5" y="3.5" width="453" height="453" fill="none" stroke="#333" stroke-width="1" stroke-dasharray="3 3"/></svg>
<svg class="a" style="left:213px;top:314px;" width="20" height="20" viewBox="0 0 20 20"><g transform="translate(10,10) rotate(45)"><path d="M-8 0 L-4 -4 L-4 -1.5 L4 -1.5 L4 -4 L8 0 L4 4 L4 1.5 L-4 1.5 L-4 4Z" fill="#111"/></g></svg>
<svg class="a" style="left:678px;top:314px;" width="20" height="20" viewBox="0 0 20 20"><g transform="translate(10,10) rotate(-45)"><path d="M-8 0 L-4 -4 L-4 -1.5 L4 -1.5 L4 -4 L8 0 L4 4 L4 1.5 L-4 1.5 L-4 4Z" fill="#111"/></g></svg>
<svg class="a" style="left:213px;top:780px;" width="20" height="20" viewBox="0 0 20 20"><g transform="translate(10,10) rotate(-45)"><path d="M-8 0 L-4 -4 L-4 -1.5 L4 -1.5 L4 -4 L8 0 L4 4 L4 1.5 L-4 1.5 L-4 4Z" fill="#111"/></g></svg>
<svg class="a" style="left:678px;top:780px;" width="20" height="20" viewBox="0 0 20 20"><g transform="translate(10,10) rotate(45)"><path d="M-8 0 L-4 -4 L-4 -1.5 L4 -1.5 L4 -4 L8 0 L4 4 L4 1.5 L-4 1.5 L-4 4Z" fill="#111"/></g></svg>
<svg class="a" style="left:445px;top:311px;" width="20" height="20" viewBox="0 0 20 20"><g transform="translate(10,10) rotate(90)"><path d="M-8 0 L-4 -4 L-4 -1.5 L4 -1.5 L4 -4 L8 0 L4 4 L4 1.5 L-4 1.5 L-4 4Z" fill="#111"/></g></svg>
<svg class="a" style="left:445px;top:782px;" width="20" height="20" viewBox="0 0 20 20"><g transform="translate(10,10) rotate(90)"><path d="M-8 0 L-4 -4 L-4 -1.5 L4 -1.5 L4 -4 L8 0 L4 4 L4 1.5 L-4 1.5 L-4 4Z" fill="#111"/></g></svg>
<svg class="a" style="left:210px;top:547px;" width="20" height="20" viewBox="0 0 20 20"><g transform="translate(10,10) rotate(0)"><path d="M-8 0 L-4 -4 L-4 -1.5 L4 -1.5 L4 -4 L8 0 L4 4 L4 1.5 L-4 1.5 L-4 4Z" fill="#111"/></g></svg>
<svg class="a" style="left:681px;top:547px;" width="20" height="20" viewBox="0 0 20 20"><g transform="translate(10,10) rotate(0)"><path d="M-8 0 L-4 -4 L-4 -1.5 L4 -1.5 L4 -4 L8 0 L4 4 L4 1.5 L-4 1.5 L-4 4Z" fill="#111"/></g></svg>
<div class="a" style="left:34px;top:983px;width:1243px;height:20px;background:#303030;"></div>
<div class="a" style="left:1277px;top:100px;width:25px;height:903px;background:#2e2e2e;"></div>
<div class="a" style="left:1302px;top:100px;width:13px;height:903px;background:#313131;"></div>
<div class="a" style="left:1278px;top:102px;width:25px;height:21px;background:#2e2e2e;border:1px solid #1e1e1e;border-radius:4px"></div>
<svg class="a" style="left:1281px;top:104px;" width="19" height="17" viewBox="0 0 19 17"><rect x="2" y="2" width="15" height="10" rx="1" fill="none" stroke="#eee" stroke-width="1.5"/><path d="M9.5 12 V14 M5.5 14.5 H13.5" stroke="#eee" stroke-width="1.5"/></svg>
<div class="a" style="left:1286px;top:257px;width:8px;height:593px;background:#9d9d9d;border-radius:4px"></div>
<div class="a" style="left:38px;top:988px;width:924px;height:8px;background:#9d9d9d;border-radius:4px"></div>
<div class="a" style="left:1279px;top:983px;width:24px;height:18px;background:#272727;border:1px solid #1c1c1c;border-radius:3px"></div>
<svg class="a" style="left:1280px;top:982px;" width="22" height="20" viewBox="0 0 22 20"><circle cx="11" cy="6" r="3.5" fill="none" stroke="#ddd" stroke-width="1"/><circle cx="8" cy="11" r="3.5" fill="#1aa050" stroke="#ddd" stroke-width="1"/><circle cx="14" cy="11" r="3.5" fill="#e0207a" stroke="#ddd" stroke-width="1"/></svg>
<div class="a" style="left:1315px;top:106px;width:555px;height:892px;background:#2a2a2a;"></div>
<div class="a" style="left:1315px;top:106px;width:137px;height:37px;background:#252525;"></div>
<div class="a" style="left:1597px;top:106px;width:273px;height:37px;background:#252525;"></div>
<div class="a" style="left:1840px;top:106px;width:30px;height:37px;background:#282828;"></div>
<div class="a" style="left:1452px;top:138px;width:145px;height:5px;background:#2c5aa8;"></div>
<div class="a" style="left:1315px;top:143px;width:555px;height:1px;background:#1e1e1e;"></div>
<svg class="a" style="left:1340px;top:112px;" width="24" height="24" viewBox="0 0 24 24"><path d="M4 7 L17 4 L20 8 L7 10Z" fill="#3aa0d8"/><path d="M4 12 L17 9 L20 13 L7 15Z" fill="#d8d8e8"/><path d="M4 17 L17 14 L20 18 L7 20Z" fill="#3aa0d8"/><path d="M5 11 L17 9" stroke="#d03060" stroke-width="0.8"/></svg>
<svg class="a" style="left:1402px;top:112px;" width="24" height="24" viewBox="0 0 24 24"><path d="M3 4 H14 M3 4 V18" stroke="#e8e8e8" stroke-width="1.6" fill="none"/><path d="M8 18 L20 5" stroke="#e8e8e8" stroke-width="2.4"/><path d="M6 20 L9 16" stroke="#2a90d0" stroke-width="3"/></svg>
<svg class="a" style="left:1464px;top:116px;" width="16" height="16" viewBox="0 0 16 16"><rect x="1" y="2" width="14" height="12" fill="#0e5a0e" stroke="#2cc02c" stroke-width="1.4"/><path d="M3 12 L7 7 L10 10 L13 5 V12Z" fill="#063806"/><circle cx="5" cy="5" r="1.2" fill="#2cc02c"/></svg>
<div class="t tt" style="left:1482px;top:117.3px;font-size:15px;color:#e8e8e8;font-weight:normal;transform-origin:0 0;transform:scaleX(0.9725);">Trace Bitmap</div>
<svg class="a" style="left:1573px;top:117px;" width="12" height="12" viewBox="0 0 12 12"><path d="M2 2 L10 10 M10 2 L2 10" stroke="#ccc" stroke-width="1.5"/></svg>
<svg class="a" style="left:1845px;top:115px;" width="20" height="16" viewBox="0 0 20 16"><path d="M4 5 L10 11 L16 5" stroke="#aaa" stroke-width="1.6" fill="none"/></svg>
<div class="t tt" style="left:1330px;top:152.3px;font-size:15px;color:#e8e8e8;font-weight:normal;transform-origin:0 0;transform:scaleX(0.9695);">Single scan</div>
<div class="t tt" style="left:1426px;top:152.3px;font-size:15px;color:#e0e0e0;font-weight:normal;transform-origin:0 0;transform:scaleX(1.0781);">Multicolor</div>
<div class="t tt" style="left:1516.5px;top:152.3px;font-size:15px;color:#e0e0e0;font-weight:normal;transform-origin:0 0;transform:scaleX(0.9910);">Pixel art</div>
<div class="a" style="left:1323px;top:169px;width:90px;height:4px;background:#2c5aa8;border-radius:2px"></div>
<div class="a" style="left:1315px;top:175px;width:555px;height:1px;background:#262626;"></div>
<div class="t tt" style="left:1325px;top:180.3px;font-size:15px;color:#f0f0f0;font-weight:bold;transform-origin:0 0;transform:scaleX(0.9803);">Detection mode:</div>
<div class="box" style="left:1326px;top:202px;width:535px;height:34px;background:#2d2d2d;border-color:#1e1e1e"></div>
<div class="t tt" style="left:1336px;top:212.3px;font-size:15px;color:#e0e0e0;font-weight:normal;transform-origin:0 0;transform:scaleX(1.0067);">Brightness cutoff</div>
<svg class="a" style="left:1834px;top:212px;" width="18" height="12" viewBox="0 0 18 12"><path d="M3 3 H15 L9 9Z" fill="#eee"/></svg>
<div class="t tt" style="left:1324.5px;top:251.3px;font-size:15px;color:#e0e0e0;font-weight:normal;transform-origin:0 0;transform:scaleX(0.9700);">Threshold</div>
<div class="a" style="left:1473px;top:255.5px;width:293px;height:3px;background:#1c1c1c;border-radius:2px"></div>
<div class="a" style="left:1473px;top:255.5px;width:132px;height:3.5px;background:#0c1a36;border-radius:2px"></div>
<div class="a" style="left:1474px;top:256px;width:131px;height:2px;background:#3064bc;"></div>
<div class="a" style="left:1595px;top:247px;width:20px;height:20px;border-radius:50%;background:#2c2c2c;border:2px solid #131313"></div>
<div class="box" style="left:1777px;top:240px;width:84px;height:34px"></div>
<div class="t tt" style="left:1785px;top:250.3px;font-size:15px;color:#e6e6e6;font-weight:normal;">0.450</div>
<div class="a" style="left:1830px;top:256px;width:12px;height:1.6px;background:#e8e8e8;"></div>
<div class="a" style="left:1846px;top:256px;width:12px;height:1.6px;background:#e8e8e8;"></div>
<div class="a" style="left:1851.2px;top:251px;width:1.6px;height:12px;background:#e8e8e8;"></div>
<div class="a" style="left:1329px;top:282px;width:16px;height:16px;border-radius:3px;background:#262626;border:1px solid #1a1a1a"></div>
<div class="t tt" style="left:1349px;top:284.3px;font-size:15px;color:#e0e0e0;font-weight:normal;transform-origin:0 0;transform:scaleX(1.0031);">Invert image</div>
<div class="t tt" style="left:1324.5px;top:311.3px;font-size:15px;color:#f0f0f0;font-weight:bold;transform-origin:0 0;transform:scaleX(0.9633);">Details:</div>
<div class="a" style="left:1329px;top:341px;width:16px;height:16px;border-radius:3px;background:#2c78e0"></div>
<svg class="a" style="left:1329px;top:341px;" width="16" height="16" viewBox="0 0 16 16"><path d="M3.5 8.5 L6.8 11.5 L12.5 4.5" stroke="#fff" stroke-width="2.2" fill="none"/></svg>
<div class="t tt" style="left:1349px;top:343.3px;font-size:15px;color:#e0e0e0;font-weight:normal;transform-origin:0 0;transform:scaleX(0.9396);">Speckles</div>
<div class="a" style="left:1473px;top:347.5px;width:293px;height:3px;background:#1c1c1c;border-radius:2px"></div>
<div class="a" style="left:1466px;top:339px;width:20px;height:20px;border-radius:50%;background:#2c2c2c;border:2px solid #131313"></div>
<div class="box" style="left:1777px;top:334px;width:84px;height:33px"></div>
<div class="t tt" style="left:1785px;top:343.3px;font-size:15px;color:#e6e6e6;font-weight:normal;">2</div>
<div class="a" style="left:1830px;top:350px;width:12px;height:1.6px;background:#e8e8e8;"></div>
<div class="a" style="left:1846px;top:350px;width:12px;height:1.6px;background:#e8e8e8;"></div>
<div class="a" style="left:1851.2px;top:344px;width:1.6px;height:12px;background:#e8e8e8;"></div>
<div class="a" style="left:1329px;top:379px;width:16px;height:16px;border-radius:3px;background:#2c78e0"></div>
<svg class="a" style="left:1329px;top:379px;" width="16" height="16" viewBox="0 0 16 16"><path d="M3.5 8.5 L6.8 11.5 L12.5 4.5" stroke="#fff" stroke-width="2.2" fill="none"/></svg>
<div class="t tt" style="left:1349px;top:381.3px;font-size:15px;color:#e0e0e0;font-weight:normal;transform-origin:0 0;transform:scaleX(0.9840);">Smooth corners</div>
<div class="a" style="left:1473px;top:385.5px;width:293px;height:3px;background:#1c1c1c;border-radius:2px"></div>
<div class="a" style="left:1473px;top:385.5px;width:217px;height:3.5px;background:#0c1a36;border-radius:2px"></div>
<div class="a" style="left:1474px;top:386px;width:216px;height:2px;background:#3064bc;"></div>
<div class="a" style="left:1680px;top:377px;width:20px;height:20px;border-radius:50%;background:#2c2c2c;border:2px solid #131313"></div>
<div class="box" style="left:1777px;top:371px;width:84px;height:32px"></div>
<div class="t tt" style="left:1785px;top:381.3px;font-size:15px;color:#e6e6e6;font-weight:normal;">1.00</div>
<div class="a" style="left:1830px;top:386px;width:12px;height:1.6px;background:#e8e8e8;"></div>
<div class="a" style="left:1846px;top:386px;width:12px;height:1.6px;background:#e8e8e8;"></div>
<div class="a" style="left:1851.2px;top:381px;width:1.6px;height:12px;background:#e8e8e8;"></div>
<div class="a" style="left:1329px;top:417px;width:16px;height:16px;border-radius:3px;background:#2c78e0"></div>
<svg class="a" style="left:1329px;top:417px;" width="16" height="16" viewBox="0 0 16 16"><path d="M3.5 8.5 L6.8 11.5 L12.5 4.5" stroke="#fff" stroke-width="2.2" fill="none"/></svg>
<div class="t tt" style="left:1349px;top:419.3px;font-size:15px;color:#e0e0e0;font-weight:normal;transform-origin:0 0;transform:scaleX(1.0340);">Optimize</div>
<div class="a" style="left:1473px;top:423.5px;width:293px;height:3px;background:#1c1c1c;border-radius:2px"></div>
<div class="a" style="left:1477px;top:415px;width:20px;height:20px;border-radius:50%;background:#2c2c2c;border:2px solid #131313"></div>
<div class="box" style="left:1777px;top:409px;width:84px;height:33px"></div>
<div class="t tt" style="left:1785px;top:419.3px;font-size:15px;color:#e6e6e6;font-weight:normal;">0.200</div>
<div class="a" style="left:1830px;top:425px;width:12px;height:1.6px;background:#e8e8e8;"></div>
<div class="a" style="left:1846px;top:425px;width:12px;height:1.6px;background:#e8e8e8;"></div>
<div class="a" style="left:1851.2px;top:420px;width:1.6px;height:12px;background:#e8e8e8;"></div>
<div class="a" style="left:1329px;top:450px;width:16px;height:16px;border-radius:3px;background:#262626;border:1px solid #1a1a1a"></div>
<div class="t tt" style="left:1349px;top:453.3px;font-size:15px;color:#e0e0e0;font-weight:normal;transform-origin:0 0;transform:scaleX(0.9573);">User-assisted trace</div>
<div class="a" style="left:1316px;top:503px;width:554px;height:1px;background:#1e1e1e;"></div>
<div class="t tt" style="left:1319.3px;top:513.3px;font-size:15px;color:#d8d8d8;font-weight:normal;transform-origin:0 0;transform:scaleX(0.9421);">Preview:</div>
<svg class="a" style="left:1304px;top:540px;" width="10" height="20" viewBox="0 0 10 20"><circle cx="5" cy="4" r="1.5" fill="#ddd"/><circle cx="5" cy="10" r="1.5" fill="#ddd"/><circle cx="5" cy="16" r="1.5" fill="#ddd"/></svg>
<div class="a" style="left:1329px;top:921px;width:16px;height:16px;border-radius:3px;background:#2c78e0"></div>
<svg class="a" style="left:1329px;top:921px;" width="16" height="16" viewBox="0 0 16 16"><path d="M3.5 8.5 L6.8 11.5 L12.5 4.5" stroke="#fff" stroke-width="2.2" fill="none"/></svg>
<div class="t tt" style="left:1348px;top:922.3px;font-size:15px;color:#e0e0e0;font-weight:normal;transform-origin:0 0;transform:scaleX(0.9862);">Live updates</div>
<div class="box" style="left:1722px;top:913px;width:138px;height:33px;background:#2d2d2d;border-color:#1c1c1c"></div>
<div class="t tt" style="left:1738px;top:922.3px;font-size:15px;color:#e0e0e0;font-weight:normal;transform-origin:0 0;transform:scaleX(1.0189);">Update preview</div>
<div class="box" style="left:1321px;top:957px;width:34px;height:33px;background:#2d2d2d;border-color:#1c1c1c"></div>
<svg class="a" style="left:1328px;top:964px;" width="20" height="20" viewBox="0 0 20 20"><circle cx="10" cy="10" r="7.5" fill="none" stroke="#ddd" stroke-width="1.3"/><path d="M10.5 8.5 L9.5 14" stroke="#ddd" stroke-width="1.6"/><circle cx="10.8" cy="6" r="1" fill="#ddd"/></svg>
<div class="box" style="left:1537px;top:957px;width:156px;height:33px;background:#2d2d2d;border-color:#1c1c1c"></div>
<div class="t tt" style="left:1594.5px;top:967.3px;font-size:15px;color:#e0e0e0;font-weight:normal;transform-origin:0 0;transform:scaleX(1.0311);">Apply</div>
<svg class="a" style="left:1887px;top:113px;" width="20" height="20" viewBox="0 0 20 20"><path d="M4 3 H11 L15 7 V17 H4Z" fill="none" stroke="#fff" stroke-width="1.8"/><circle cx="15" cy="3" r="2" fill="#22aa44"/></svg>
<svg class="a" style="left:1887px;top:148px;" width="20" height="20" viewBox="0 0 20 20"><path d="M3 5 H8 L10 7 H17 V16 H3Z" fill="none" stroke="#fff" stroke-width="1.8"/><path d="M3 10 H17" stroke="#fff" stroke-width="1.6"/></svg>
<svg class="a" style="left:1887px;top:183px;" width="20" height="20" viewBox="0 0 20 20"><path d="M3 11 V17 H17 V11" fill="none" stroke="#fff" stroke-width="1.8"/><rect x="5" y="13" width="10" height="2" fill="#fff"/><path d="M10 2 V9 M7 6.5 L10 9.5 L13 6.5" stroke="#2aa52a" stroke-width="2" fill="none"/></svg>
<svg class="a" style="left:1887px;top:217px;" width="20" height="20" viewBox="0 0 20 20"><rect x="6" y="3" width="8" height="3" fill="#fff"/><rect x="3" y="7" width="14" height="7" rx="1" fill="#fff"/><rect x="6" y="12" width="8" height="5" fill="#fff" stroke="#2e2e2e" stroke-width="1"/></svg>
<svg class="a" style="left:1887px;top:265px;" width="20" height="20" viewBox="0 0 20 20"><path d="M6 3 H12 L16 7 V17 H6Z" fill="none" stroke="#fff" stroke-width="1.8"/><path d="M2 11 H10 M7.5 8.5 L10 11 L7.5 13.5" stroke="#2aa52a" stroke-width="1.8" fill="none"/></svg>
<svg class="a" style="left:1887px;top:301px;" width="20" height="20" viewBox="0 0 20 20"><path d="M4 3 H10 L14 7 V17 H4Z" fill="none" stroke="#fff" stroke-width="1.8"/><path d="M9 11 H17 M14.5 8.5 L17 11 L14.5 13.5" stroke="#2aa52a" stroke-width="1.8" fill="none"/></svg>
<svg class="a" style="left:1887px;top:349px;" width="20" height="20" viewBox="0 0 20 20"><path d="M6 8 H12 a3.5 3.5 0 0 1 0 7 H9" stroke="#fff" stroke-width="1.8" fill="none"/><path d="M8 5 L5 8 L8 11" stroke="#fff" stroke-width="1.8" fill="none"/></svg>
<svg class="a" style="left:1887px;top:385px;" width="20" height="20" viewBox="0 0 20 20"><path d="M14 8 H8 a3.5 3.5 0 0 0 0 7 H11" stroke="#777" stroke-width="1.8" fill="none"/><path d="M12 5 L15 8 L12 11" stroke="#777" stroke-width="1.8" fill="none"/></svg>
<svg class="a" style="left:1887px;top:434px;" width="20" height="20" viewBox="0 0 20 20"><rect x="3" y="3" width="9" height="9" fill="#fff"/><rect x="8" y="8" width="9" height="9" fill="#fff" stroke="#2e2e2e" stroke-width="1"/></svg>
<svg class="a" style="left:1887px;top:470px;" width="20" height="20" viewBox="0 0 20 20"><circle cx="6" cy="15" r="2.8" fill="none" stroke="#fff" stroke-width="1.6"/><circle cx="14" cy="15" r="2.8" fill="none" stroke="#fff" stroke-width="1.6"/><path d="M7 13 L14 3 M13 13 L6 3" stroke="#fff" stroke-width="1.6"/></svg>
<svg class="a" style="left:1887px;top:505px;" width="20" height="20" viewBox="0 0 20 20"><rect x="4" y="4" width="12" height="14" fill="none" stroke="#fff" stroke-width="1.8"/><rect x="7" y="2" width="6" height="4" fill="#fff"/><rect x="6" y="7" width="8" height="9" fill="#ddd"/></svg>
<svg class="a" style="left:1887px;top:553px;" width="20" height="20" viewBox="0 0 20 20"><circle cx="9" cy="9" r="6.5" fill="#fff"/><rect x="5.5" y="5.5" width="7" height="7" fill="none" stroke="#555" stroke-width="1" stroke-dasharray="1 1"/><path d="M13.5 13.5 L17 17" stroke="#fff" stroke-width="2.5"/></svg>
<svg class="a" style="left:1887px;top:588px;" width="20" height="20" viewBox="0 0 20 20"><circle cx="9" cy="9" r="6.5" fill="#fff"/><path d="M6 10 L9 6 L12 10 L9 12Z" fill="#444"/><path d="M13.5 13.5 L17 17" stroke="#fff" stroke-width="2.5"/></svg>
<svg class="a" style="left:1887px;top:623px;" width="20" height="20" viewBox="0 0 20 20"><circle cx="9" cy="9" r="6.5" fill="#fff"/><rect x="6.5" y="5" width="5" height="8" fill="#444"/><path d="M13.5 13.5 L17 17" stroke="#fff" stroke-width="2.5"/></svg>
<svg class="a" style="left:1887px;top:658px;" width="20" height="20" viewBox="0 0 20 20"><rect x="3" y="3" width="14" height="14" fill="none" stroke="#ddd" stroke-width="1.2" stroke-dasharray="2 1"/><path d="M10 6 V14 M6 10 H14" stroke="#fff" stroke-width="1.5"/></svg>
<svg class="a" style="left:1887px;top:707px;" width="20" height="20" viewBox="0 0 20 20"><rect x="3" y="3" width="9" height="9" fill="#fff"/><rect x="8" y="8" width="9" height="9" fill="#22aa33" stroke="#2e2e2e" stroke-width="1"/></svg>
<svg class="a" style="left:1887px;top:742px;" width="20" height="20" viewBox="0 0 20 20"><rect x="3" y="3" width="9" height="9" fill="#fff"/><rect x="8" y="8" width="9" height="9" fill="#fff" stroke="#2e2e2e" stroke-width="1"/><rect x="10" y="11" width="5" height="4" fill="#333"/></svg>
<svg class="a" style="left:1887px;top:777px;" width="20" height="20" viewBox="0 0 20 20"><rect x="3" y="3" width="9" height="9" fill="#fff"/><rect x="8" y="8" width="9" height="9" fill="#fff" stroke="#2e2e2e" stroke-width="1"/><rect x="10" y="12" width="5" height="3" fill="#333"/></svg>
<svg class="a" style="left:1887px;top:825px;" width="20" height="20" viewBox="0 0 20 20"><circle cx="9" cy="9" r="4" fill="#fff"/><rect x="9" y="9" width="6" height="6" fill="#fff"/><path d="M3 3 h2 M15 3 h2 M3 17 h2 M15 17 h2" stroke="#2aa52a" stroke-width="2"/></svg>
<svg class="a" style="left:1887px;top:861px;" width="20" height="20" viewBox="0 0 20 20"><circle cx="9" cy="9" r="4" fill="#fff"/><rect x="9" y="9" width="6" height="6" fill="#fff"/><path d="M3 3 l2 2 M17 3 l-2 2 M3 17 l2 -2 M17 17 l-2 -2" stroke="#ccc" stroke-width="1.6"/></svg>
<svg class="a" style="left:1887px;top:909px;" width="20" height="20" viewBox="0 0 20 20"><path d="M3 16 V4 H13" stroke="#e8e8e8" stroke-width="1.5" fill="none"/><path d="M8 13 L17 4" stroke="#e8e8e8" stroke-width="2.3"/><path d="M5 16.5 L8.5 13" stroke="#2a90d0" stroke-width="2.6"/></svg>
<svg class="a" style="left:1889px;top:972px;" width="16" height="16" viewBox="0 0 16 16"><path d="M5 3 V13 L11 8Z" fill="#eee"/></svg>
<div class="a" style="left:0px;top:1003px;width:34px;height:33px;background:#ffffff;"></div>
<svg class="a" style="left:0px;top:1003px;" width="34" height="33" viewBox="0 0 34 33"><path d="M3 3 L31 30 M31 3 L3 30" stroke="#d0304a" stroke-width="2.2"/></svg>
<div class="a" style="left:34px;top:1003px;width:34px;height:33px;background:#000000;"></div>
<div class="a" style="left:68px;top:1003px;width:34px;height:33px;background:#808080;"></div>
<div class="a" style="left:102px;top:1003px;width:34px;height:33px;background:#ffffff;"></div>
<div class="a" style="left:170px;top:1020px;width:1666px;height:16px;background:#232323;"></div>
<svg class="a" style="left:136px;top:1020px;" width="1700" height="16" viewBox="0 0 1700 16"><rect x="0.25" y="0" width="16.10" height="16" fill="#1a1a1a"/><rect x="17.25" y="0" width="16.10" height="16" fill="#333333"/><rect x="34.24" y="0" width="16.10" height="16" fill="#4d4d4d"/><rect x="51.24" y="0" width="16.10" height="16" fill="#666666"/><rect x="68.23" y="0" width="16.10" height="16" fill="#999999"/><rect x="85.23" y="0" width="16.10" height="16" fill="#b3b3b3"/><rect x="102.22" y="0" width="16.10" height="16" fill="#cccccc"/><rect x="119.22" y="0" width="16.10" height="16" fill="#e6e6e6"/><rect x="136.21" y="0" width="16.10" height="16" fill="#ececec"/><rect x="153.21" y="0" width="16.10" height="16" fill="#f2f2f2"/><rect x="170.20" y="0" width="16.10" height="16" fill="#f8f8f8"/><rect x="187.20" y="0" width="16.10" height="16" fill="#800000"/><rect x="204.20" y="0" width="16.10" height="16" fill="#ff0000"/><rect x="221.19" y="0" width="16.10" height="16" fill="#808000"/><rect x="238.19" y="0" width="16.10" height="16" fill="#ffff00"/><rect x="255.18" y="0" width="16.10" height="16" fill="#008000"/><rect x="272.18" y="0" width="16.10" height="16" fill="#00ff00"/><rect x="289.17" y="0" width="16.10" height="16" fill="#008080"/><rect x="306.17" y="0" width="16.10" height="16" fill="#00ffff"/><rect x="323.16" y="0" width="16.10" height="16" fill="#000080"/><rect x="340.16" y="0" width="16.10" height="16" fill="#0000ff"/><rect x="357.16" y="0" width="16.10" height="16" fill="#800080"/><rect x="374.15" y="0" width="16.10" height="16" fill="#ff00ff"/><rect x="391.15" y="0" width="16.10" height="16" fill="#2b0000"/><rect x="408.14" y="0" width="16.10" height="16" fill="#550000"/><rect x="425.14" y="0" width="16.10" height="16" fill="#800000"/><rect x="442.13" y="0" width="16.10" height="16" fill="#aa0000"/><rect x="459.13" y="0" width="16.10" height="16" fill="#d40000"/><rect x="476.12" y="0" width="16.10" height="16" fill="#ff0000"/><rect x="493.12" y="0" width="16.10" height="16" fill="#ff2a2a"/><rect x="510.12" y="0" width="16.10" height="16" fill="#ff5555"/><rect x="527.11" y="0" width="16.10" height="16" fill="#ff8080"/><rect x="544.11" y="0" width="16.10" height="16" fill="#ffaaaa"/><rect x="561.10" y="0" width="16.10" height="16" fill="#ffd5d5"/><rect x="578.10" y="0" width="16.10" height="16" fill="#280b0b"/><rect x="595.09" y="0" width="16.10" height="16" fill="#501616"/><rect x="612.09" y="0" width="16.10" height="16" fill="#782121"/><rect x="629.08" y="0" width="16.10" height="16" fill="#a02c2c"/><rect x="646.08" y="0" width="16.10" height="16" fill="#c83737"/><rect x="663.07" y="0" width="16.10" height="16" fill="#d35f5f"/><rect x="680.07" y="0" width="16.10" height="16" fill="#de8787"/><rect x="697.07" y="0" width="16.10" height="16" fill="#e9afaf"/><rect x="714.06" y="0" width="16.10" height="16" fill="#f4d7d7"/><rect x="731.06" y="0" width="16.10" height="16" fill="#241c1c"/><rect x="748.05" y="0" width="16.10" height="16" fill="#483737"/><rect x="765.05" y="0" width="16.10" height="16" fill="#6c5353"/><rect x="782.04" y="0" width="16.10" height="16" fill="#916f6f"/><rect x="799.04" y="0" width="16.10" height="16" fill="#ac9393"/><rect x="816.03" y="0" width="16.10" height="16" fill="#c8b7b7"/><rect x="833.03" y="0" width="16.10" height="16" fill="#e3dbdb"/><rect x="850.02" y="0" width="16.10" height="16" fill="#2b1100"/><rect x="867.02" y="0" width="16.10" height="16" fill="#552200"/><rect x="884.02" y="0" width="16.10" height="16" fill="#803300"/><rect x="901.01" y="0" width="16.10" height="16" fill="#aa4400"/><rect x="918.01" y="0" width="16.10" height="16" fill="#d45500"/><rect x="935.00" y="0" width="16.10" height="16" fill="#ff6600"/><rect x="952.00" y="0" width="16.10" height="16" fill="#ff7f2a"/><rect x="968.99" y="0" width="16.10" height="16" fill="#ff9955"/><rect x="985.99" y="0" width="16.10" height="16" fill="#ffb380"/><rect x="1002.98" y="0" width="16.10" height="16" fill="#ffccaa"/><rect x="1019.98" y="0" width="16.10" height="16" fill="#ffe6d5"/><rect x="1036.98" y="0" width="16.10" height="16" fill="#28170b"/><rect x="1053.97" y="0" width="16.10" height="16" fill="#502d16"/><rect x="1070.97" y="0" width="16.10" height="16" fill="#784421"/><rect x="1087.96" y="0" width="16.10" height="16" fill="#a05a2c"/><rect x="1104.96" y="0" width="16.10" height="16" fill="#c87137"/><rect x="1121.95" y="0" width="16.10" height="16" fill="#d38d5f"/><rect x="1138.95" y="0" width="16.10" height="16" fill="#deaa87"/><rect x="1155.94" y="0" width="16.10" height="16" fill="#e9c6af"/><rect x="1172.94" y="0" width="16.10" height="16" fill="#f4e3d7"/><rect x="1189.93" y="0" width="16.10" height="16" fill="#241f1c"/><rect x="1206.93" y="0" width="16.10" height="16" fill="#483e37"/><rect x="1223.93" y="0" width="16.10" height="16" fill="#6c5d53"/><rect x="1240.92" y="0" width="16.10" height="16" fill="#917c6f"/><rect x="1257.92" y="0" width="16.10" height="16" fill="#ac9d93"/><rect x="1274.91" y="0" width="16.10" height="16" fill="#c8beb7"/><rect x="1291.91" y="0" width="16.10" height="16" fill="#e3dedb"/><rect x="1308.90" y="0" width="16.10" height="16" fill="#2b2200"/><rect x="1325.90" y="0" width="16.10" height="16" fill="#554400"/><rect x="1342.89" y="0" width="16.10" height="16" fill="#806600"/><rect x="1359.89" y="0" width="16.10" height="16" fill="#aa8800"/><rect x="1376.89" y="0" width="16.10" height="16" fill="#d4aa00"/><rect x="1393.88" y="0" width="16.10" height="16" fill="#ffcc00"/><rect x="1410.88" y="0" width="16.10" height="16" fill="#ffd42a"/><rect x="1427.87" y="0" width="16.10" height="16" fill="#ffdd55"/><rect x="1444.87" y="0" width="16.10" height="16" fill="#ffe680"/><rect x="1461.86" y="0" width="16.10" height="16" fill="#ffeeaa"/><rect x="1478.86" y="0" width="16.10" height="16" fill="#fff6d5"/><rect x="1495.85" y="0" width="16.10" height="16" fill="#28220b"/><rect x="1512.85" y="0" width="16.10" height="16" fill="#504416"/><rect x="1529.85" y="0" width="16.10" height="16" fill="#786721"/><rect x="1546.84" y="0" width="16.10" height="16" fill="#a0892c"/><rect x="1563.84" y="0" width="16.10" height="16" fill="#c8ab37"/><rect x="1580.83" y="0" width="16.10" height="16" fill="#d3bc5f"/><rect x="1597.83" y="0" width="16.10" height="16" fill="#decd87"/><rect x="1614.82" y="0" width="16.10" height="16" fill="#e9ddaf"/><rect x="1631.82" y="0" width="16.10" height="16" fill="#f4eed7"/><rect x="1648.81" y="0" width="16.10" height="16" fill="#24221c"/><rect x="1665.81" y="0" width="16.10" height="16" fill="#484537"/><rect x="1682.80" y="0" width="16.10" height="16" fill="#6c6753"/></svg>
<div class="a" style="left:430.7px;top:1025px;width:6px;height:6px;border-radius:50%;background:#a0d8d8"></div>
<svg class="a" style="left:1842px;top:1010px;" width="20" height="20" viewBox="0 0 20 20"><path d="M4 13 L10 7 L16 13" stroke="#eee" stroke-width="1.8" fill="none"/></svg>
<svg class="a" style="left:1873px;top:1008px;" width="20" height="20" viewBox="0 0 20 20"><path d="M4 7 L10 13 L16 7" stroke="#eee" stroke-width="1.8" fill="none"/></svg>
<div class="box" style="left:1900px;top:1009px;width:19px;height:27px;background:#2c2c2c;border-color:#1c1c1c;border-radius:4px"></div>
<svg class="a" style="left:1900px;top:1013px;" width="18" height="18" viewBox="0 0 18 18"><path d="M2.5 5 H15.5 M2.5 10 H15.5 M2.5 15 H15.5" stroke="#f4f4f4" stroke-width="2"/></svg>
<div class="t tt" style="left:23px;top:1042.3px;font-size:15px;color:#e0e0e0;font-weight:normal;transform-origin:0 0;transform:scaleX(0.9945);">Fill:</div>
<div class="a" style="left:62px;top:1038px;width:50px;height:21px;background:#067f80;"></div>
<div class="t tt" style="left:1px;top:1062.3px;font-size:15px;color:#e0e0e0;font-weight:normal;transform-origin:0 0;transform:scaleX(0.9510);">Stroke:</div>
<div class="t tt" style="left:66px;top:1062.3px;font-size:15px;color:#f0f0f0;font-weight:bold;transform-origin:0 0;transform:scaleX(0.9883);">Unset</div>
<div class="t tt" style="left:121px;top:1062.3px;font-size:15px;color:#e0e0e0;font-weight:normal;transform-origin:0 0;transform:scaleX(0.9314);">1.00</div>
<div class="t tt" style="left:157px;top:1052.3px;font-size:15px;color:#e0e0e0;font-weight:normal;transform-origin:0 0;transform:scaleX(0.8963);">O:</div>
<div class="box" style="left:173px;top:1039px;width:71px;height:38px"></div>
<div class="t tt" style="left:180px;top:1052.3px;font-size:15px;color:#e6e6e6;font-weight:normal;">100</div>
<div class="a" style="left:213px;top:1057px;width:12px;height:1.6px;background:#e8e8e8;"></div>
<div class="a" style="left:229px;top:1057px;width:12px;height:1.6px;background:#6a6a6a;"></div>
<div class="a" style="left:234.2px;top:1052px;width:1.6px;height:12px;background:#6a6a6a;"></div>
<div class="a" style="left:260px;top:1048px;width:3px;height:22px;background:#e8832a;"></div>
<div class="t tt" style="left:269px;top:1052.3px;font-size:15px;color:#e0e0e0;font-weight:normal;transform-origin:0 0;transform:scaleX(1.0359);">Image</div>
<svg class="a" style="left:330px;top:1049px;" width="20" height="16" viewBox="0 0 20 16"><ellipse cx="10" cy="9" rx="7" ry="4.5" fill="none" stroke="#eee" stroke-width="2"/><circle cx="10" cy="9" r="2.2" fill="#eee"/><path d="M3 5 L5 7 M17 5 L15 7 M10 2 V4" stroke="#eee" stroke-width="1.4"/></svg>
<svg class="a" style="left:368px;top:1049px;" width="20" height="18" viewBox="0 0 20 18"><rect x="2" y="8" width="10" height="8" fill="#eee"/><path d="M9 8 V5 a3 3 0 0 1 6 0 V7" stroke="#eee" stroke-width="2" fill="none"/></svg>
<div class="t tt" style="left:401.5px;top:1052.3px;font-size:15px;color:#e0e0e0;font-weight:normal;transform-origin:0 0;transform:scaleX(0.9890);"><b>Alt</b>: Select with touch-path, Cycle through objects, Forced Drag</div>
<div class="t tt" style="left:1584px;top:1043.3px;font-size:15px;color:#e0e0e0;font-weight:normal;transform-origin:0 0;transform:scaleX(0.8599);">X:</div>
<div class="t tt" style="left:1612px;top:1043.3px;font-size:15px;color:#e0e0e0;font-weight:normal;transform-origin:0 0;transform:scaleX(0.9730);">-65.19</div>
<div class="t tt" style="left:1584px;top:1064.3px;font-size:15px;color:#e0e0e0;font-weight:normal;transform-origin:0 0;transform:scaleX(0.9132);">Y:</div>
<div class="t tt" style="left:1608px;top:1064.3px;font-size:15px;color:#e0e0e0;font-weight:normal;transform-origin:0 0;transform:scaleX(0.9850);">489.45</div>
<div class="t tt" style="left:1663px;top:1052.3px;font-size:15px;color:#e0e0e0;font-weight:normal;transform-origin:0 0;transform:scaleX(0.9143);">Z:</div>
<div class="box" style="left:1677px;top:1038px;width:97px;height:45px"></div>
<div class="t tt" style="left:1689px;top:1052.3px;font-size:15px;color:#e6e6e6;font-weight:normal;">90%</div>
<div class="a" style="left:1735px;top:1058px;width:12px;height:1.6px;background:#e8e8e8;"></div>
<div class="a" style="left:1756px;top:1058px;width:12px;height:1.6px;background:#e8e8e8;"></div>
<div class="a" style="left:1761.2px;top:1052px;width:1.6px;height:12px;background:#e8e8e8;"></div>
<div class="t tt" style="left:1785px;top:1052.3px;font-size:15px;color:#e0e0e0;font-weight:normal;transform-origin:0 0;transform:scaleX(0.8133);">R:</div>
<div class="box" style="left:1797px;top:1038px;width:107px;height:45px"></div>
<div class="t tt" style="left:1814px;top:1052.3px;font-size:15px;color:#e6e6e6;font-weight:normal;">0.00°</div>
<div class="a" style="left:1864px;top:1058px;width:12px;height:1.6px;background:#e8e8e8;"></div>
<div class="a" style="left:1886px;top:1058px;width:12px;height:1.6px;background:#e8e8e8;"></div>
<div class="a" style="left:1891.2px;top:1052px;width:1.6px;height:12px;background:#e8e8e8;"></div>
</body></html>
